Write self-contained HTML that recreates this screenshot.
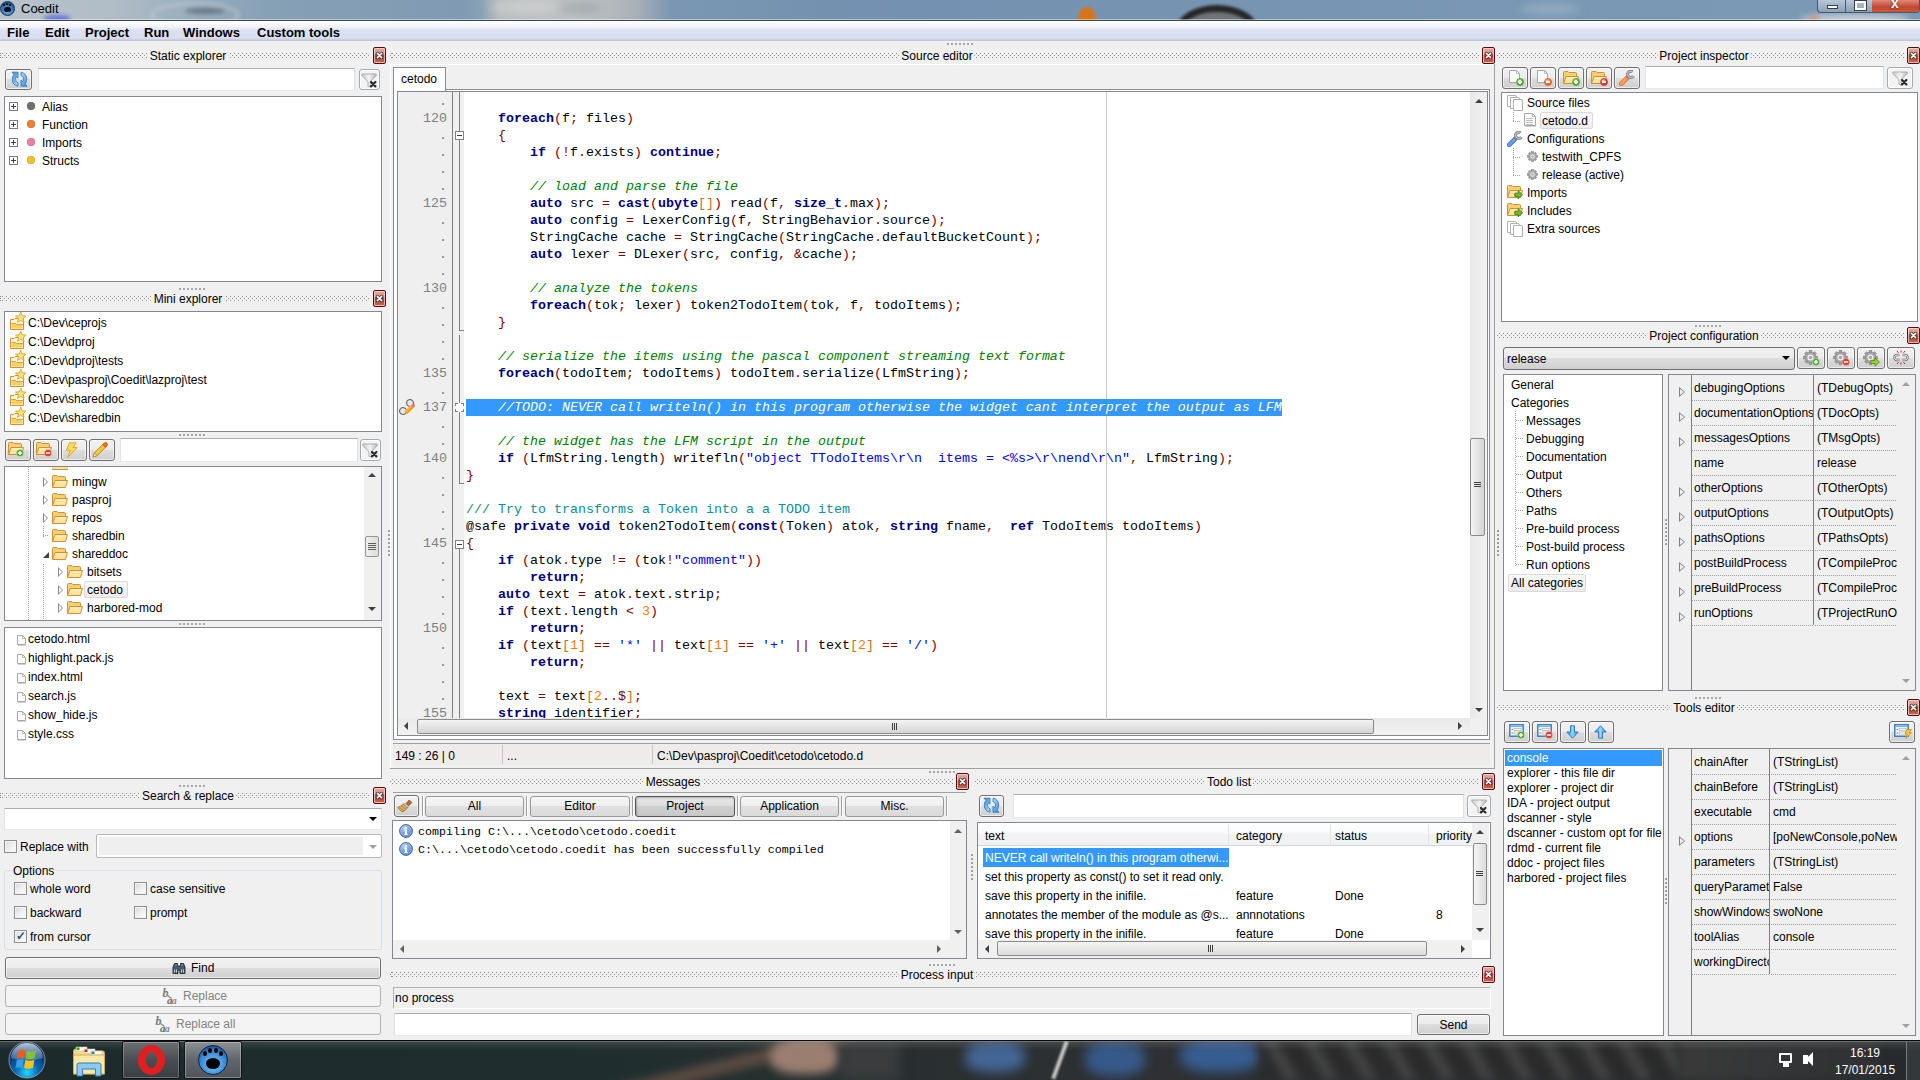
<!DOCTYPE html><html><head><meta charset="utf-8"><style>
*{box-sizing:border-box}
body{margin:0;width:1920px;height:1080px;overflow:hidden;background:#f0f0f0;font-family:"Liberation Sans",sans-serif;font-size:12px;color:#000;position:relative}
.a{position:absolute}
.t{position:absolute;white-space:nowrap;line-height:16px}
.box{position:absolute;background:#fff;border:1px solid #828790}
.dots{position:absolute;height:1px;background:repeating-linear-gradient(to right,#8c8c8c 0 1px,transparent 1px 4px)}
.cls{position:absolute;width:13px;height:17px;border:1px solid #4a1020;border-radius:2px;background:linear-gradient(#e8a898 0,#e09080 40%,#c84830 41%,#c04028 60%,#d06850 100%);box-shadow:inset 0 0 0 1px rgba(255,220,210,.7)}
.btn{position:absolute;border:1px solid #707070;border-radius:3px;background:linear-gradient(#f2f2f2 0,#ebebeb 50%,#dddddd 50%,#cfcfcf 100%);box-shadow:inset 0 0 0 1px rgba(255,255,255,.6)}
.edit{position:absolute;background:#fff;border:1px solid #abadb3;border-left-color:#e2e3ea;border-right-color:#dbdfe6;border-bottom-color:#e3e9ef}
.grip{position:absolute;height:2px;width:28px;background:repeating-linear-gradient(to right,#a8a8a8 0 2px,transparent 2px 4px)}
.mono{font-family:"Liberation Mono",monospace}
</style></head><body>
<div class="a" style="left:0;top:0;width:1920px;height:21px;overflow:hidden;background:linear-gradient(to right,#b9c3ca 0,#b0bcc6 6%,#98aebe 10%,#86a0b6 14%,#7f9ab2 24%,#86a0b4 25%,#b8bcbe 26%,#c0c2c2 30%,#aab2b8 33%,#7a96b2 35%,#7391b0 45%,#7694b2 60%,#7897b4 75%,#7b98b4 90%,#7c99b5 100%)">
<div class="a" style="left:150px;top:2px;width:90px;height:26px;border-radius:50%;border:3px solid rgba(210,215,220,.5);filter:blur(2px)"></div>
<div class="a" style="left:185px;top:8px;width:40px;height:6px;border-radius:50%;background:rgba(60,70,80,.5);filter:blur(2px)"></div>
<div class="a" style="left:44px;top:15px;width:26px;height:8px;border-radius:40%;background:#6a78d8;filter:blur(2px)"></div>
<div class="a" style="left:490px;top:0;width:70px;height:14px;border-radius:50%;background:rgba(220,220,220,.5);filter:blur(5px)"></div>
<div class="a" style="left:560px;top:2px;width:40px;height:12px;border-radius:50%;background:rgba(150,160,165,.6);filter:blur(4px)"></div>
<div class="a" style="left:1078px;top:7px;width:18px;height:24px;border-radius:50%;background:#d87418;filter:blur(1.5px)"></div>
<div class="a" style="left:1176px;top:5px;width:82px;height:50px;border-radius:50%;border:7px solid #262626;background:#707478;filter:blur(1.5px)"></div>
<div class="a" style="left:1520px;top:4px;width:60px;height:10px;border-radius:50%;background:rgba(180,195,210,.5);filter:blur(4px)"></div>
<div class="a" style="left:1800px;top:14px;width:110px;height:10px;border-radius:50%;background:rgba(230,230,235,.7);filter:blur(3px)"></div>
<div class="a" style="left:1808px;top:16px;width:12px;height:6px;border-radius:50%;background:rgba(230,130,90,.7);filter:blur(2px)"></div>
<div class="a" style="left:0;top:20px;width:1920px;height:1px;background:#3e4650"></div>
<div class="a" style="left:0;top:19px;width:1920px;height:1px;background:rgba(255,255,255,.45)"></div>
</div>
<div class="a" style="left:0;top:1px;width:15px;height:15px;border-radius:50%;background:radial-gradient(circle at 50% 70%,#5ab8f0 0,#2a6ab0 60%,#1a3050 100%);border:1px solid #20304a"></div>
<div class="a" style="left:4px;top:7px;width:7px;height:5px;border-radius:50%;background:#000"></div>
<div class="a" style="left:3px;top:4px;width:2px;height:2px;border-radius:50%;background:#000"></div>
<div class="a" style="left:6px;top:3px;width:2px;height:2px;border-radius:50%;background:#000"></div>
<div class="a" style="left:9px;top:4px;width:2px;height:2px;border-radius:50%;background:#000"></div>
<div class="t" style="left:21px;top:1px;font-size:13px;color:#000">Coedit</div>
<div class="a" style="left:1817px;top:0;width:103px;height:13px;border:1px solid #4a5866;border-top:none;border-radius:0 0 4px 4px;overflow:hidden;background:linear-gradient(#b8c8d8,#8aa0b8)">
<div class="a" style="left:27px;top:0;width:1px;height:12px;background:#4a5866"></div>
<div class="a" style="left:54px;top:0;width:48px;height:12px;background:linear-gradient(#e08878,#c04830 60%,#d05838)"></div>
<div class="a" style="left:9px;top:5px;width:11px;height:4px;background:#fff;border:1px solid #304050"></div>
<div class="a" style="left:37px;top:1px;width:11px;height:9px;border:2px solid #fff;box-shadow:0 0 0 1px #304050"></div>
<div class="a" style="left:53px;top:-5px;width:48px;height:14px;text-align:center;color:#fff;font-weight:bold;font-size:14px;text-shadow:0 0 2px #400">x</div>
</div>
<div class="a" style="left:0;top:21px;width:1920px;height:20px;background:linear-gradient(#ffffff 0,#f1f3fb 30%,#dde2f2 45%,#d9def0 85%,#c6cddf 95%,#b9c1d3 100%)"></div>
<div class="t" style="left:7px;top:25px;font-weight:bold;font-size:13px">File</div>
<div class="t" style="left:45px;top:25px;font-weight:bold;font-size:13px">Edit</div>
<div class="t" style="left:85px;top:25px;font-weight:bold;font-size:13px">Project</div>
<div class="t" style="left:144px;top:25px;font-weight:bold;font-size:13px">Run</div>
<div class="t" style="left:183px;top:25px;font-weight:bold;font-size:13px">Windows</div>
<div class="t" style="left:257px;top:25px;font-weight:bold;font-size:13px">Custom tools</div>
<div class="a" style="left:0;top:1040px;width:1920px;height:40px;overflow:hidden;background:linear-gradient(to right,#1c2a2b 0,#1f2d2e 30%,#25302f 40%,#2a2f30 50%,#2e3033 60%,#2c2e30 75%,#2a2c2e 90%,#262a2c 100%)">
<div class="a" style="left:600px;top:18px;width:260px;height:14px;background:#5a4a42;transform:rotate(-14deg);filter:blur(4px)"></div>
<div class="a" style="left:770px;top:0;width:70px;height:34px;border-radius:40%;background:#9a7e70;filter:blur(5px)"></div>
<div class="a" style="left:840px;top:0;width:60px;height:40px;background:#3a3c3e;filter:blur(6px)"></div>
<div class="a" style="left:965px;top:2px;width:60px;height:30px;border-radius:40%;background:#4a74b0;filter:blur(6px);opacity:.8"></div>
<div class="a" style="left:1058px;top:0;width:4px;height:40px;background:#c8c8c8;transform:rotate(20deg);filter:blur(1px)"></div>
<div class="a" style="left:1085px;top:2px;width:60px;height:34px;border-radius:40%;background:#3a64a0;filter:blur(6px);opacity:.8"></div>
<div class="a" style="left:1180px;top:0;width:80px;height:32px;border-radius:40%;background:#3a68a8;filter:blur(6px);opacity:.8"></div>
<div class="a" style="left:1260px;top:0;width:420px;height:40px;background:repeating-linear-gradient(60deg,#2a2a2a 0 22px,#4a4a4a 22px 34px);filter:blur(5px);opacity:.8"></div>
<div class="a" style="left:1680px;top:0;width:200px;height:40px;background:linear-gradient(to right,#3a3a3a,#2e3032);filter:blur(4px)"></div>
<div class="a" style="left:0;top:0;width:1920px;height:1px;background:#0a0a0a"></div>
<div class="a" style="left:0;top:1px;width:1920px;height:1px;background:rgba(255,255,255,.3)"></div>
<div class="a" style="left:0;top:2px;width:1920px;height:8px;background:linear-gradient(rgba(255,255,255,.12),rgba(255,255,255,0))"></div>
<div class="a" style="left:1906px;top:2px;width:14px;height:38px;background:rgba(60,66,70,.6);border-left:1px solid rgba(255,255,255,.35)"></div>
</div>
<svg class="a" style="left:8px;top:1041px" width="38" height="38" viewBox="0 0 38 38"><defs><radialGradient id="orb" cx="0.5" cy="0.85" r="0.7"><stop offset="0" stop-color="#20d8ff"/><stop offset=".45" stop-color="#0a68b8"/><stop offset="1" stop-color="#0a2a60"/></radialGradient>
<linearGradient id="orbt" x1="0" y1="0" x2="0" y2="1"><stop offset="0" stop-color="#c8d8e8" stop-opacity=".9"/><stop offset="1" stop-color="#6a90b8" stop-opacity=".5"/></linearGradient></defs>
<circle cx="19" cy="19" r="18" fill="url(#orb)" stroke="#a0a8b0" stroke-width="0.8"/>
<path d="M3 17 A16 15 0 0 1 35 17 Q19 22 3 17 Z" fill="url(#orbt)"/>
<path d="M10.5 10 Q13 8 17.5 9.5 L16 17.5 Q12 16 9 17.5 Z" fill="#f05a1a"/>
<path d="M19 10 Q23 11.5 28 9.5 L26.5 17.5 Q22 19 17.5 17.5 Z" fill="#8ac030"/>
<path d="M8.8 19 Q12 17.5 15.8 19 L14.5 27 Q11 25.5 7.5 27 Z" fill="#30a0e8"/>
<path d="M17.3 19 Q21.5 20.5 26.3 19 L25 27 Q20.5 28.5 16 27 Z" fill="#f8c020"/></svg>
<svg class="a" style="left:72px;top:1046px" width="34" height="31" viewBox="0 0 34 31"><path d="M1.5 5 Q1.5 3 3.5 3 H14 L15.5 5 H31 Q32.5 5 32.5 7 V28 H1.5 Z" fill="#f4dc90" stroke="#c8a850" stroke-width="0.9"/>
<rect x="4" y="1" width="11" height="4" fill="#fff" stroke="#d0c090" stroke-width="0.6"/><rect x="4.5" y="1.5" width="3" height="2.5" fill="#20b020"/>
<rect x="12" y="3" width="11" height="4" fill="#fff" stroke="#d0c090" stroke-width="0.6"/><rect x="12.5" y="3.5" width="3" height="2.5" fill="#d02020"/>
<rect x="19" y="5" width="11" height="4" fill="#fff" stroke="#d0c090" stroke-width="0.6"/><rect x="19.5" y="5.5" width="3" height="2.5" fill="#2080e0"/>
<path d="M1.5 9 H32.5 V28 H1.5 Z" fill="#fae8a8" stroke="#c8a850" stroke-width="0.9"/>
<path d="M5 30 V19 Q5 17 7 17 H27 Q29 17 29 19 V30 H23.5 V23 H10.5 V30 Z" fill="#8ccaf0" stroke="#2a80c0" stroke-width="1"/></svg>
<div class="a" style="left:122px;top:1041px;width:58px;height:38px;border:1px solid #101418;border-radius:2px;background:linear-gradient(#6a7074,#484e52 50%,#3a3e42);box-shadow:inset 0 0 0 1px rgba(255,255,255,.25)"></div>
<div class="a" style="left:138px;top:1045px;width:27px;height:30px;border-radius:50%;border:7px solid #e02020;border-left-width:8px;border-right-width:8px;background:transparent"></div>
<div class="a" style="left:184px;top:1041px;width:58px;height:38px;border:1px solid #101418;border-radius:2px;background:linear-gradient(#8a9094,#60666a 50%,#505458);box-shadow:inset 0 0 0 1px rgba(255,255,255,.3)"></div>
<div class="a" style="left:198px;top:1045px;width:30px;height:30px;border-radius:50%;background:radial-gradient(circle at 50% 65%,#80d0ff 0,#3080d0 60%,#102040 100%);border:1px solid #102040"></div>
<div class="a" style="left:206px;top:1058px;width:14px;height:11px;border-radius:50%;background:#000"></div>
<div class="a" style="left:203px;top:1051px;width:4px;height:5px;border-radius:50%;background:#000"></div>
<div class="a" style="left:208px;top:1048px;width:4px;height:5px;border-radius:50%;background:#000"></div>
<div class="a" style="left:214px;top:1048px;width:4px;height:5px;border-radius:50%;background:#000"></div>
<div class="a" style="left:219px;top:1051px;width:4px;height:5px;border-radius:50%;background:#000"></div>
<div class="a" style="left:1779px;top:1053px;width:13px;height:10px;border:2px solid #fff;border-radius:1px"></div>
<div class="a" style="left:1783px;top:1063px;width:6px;height:4px;background:#fff"></div>
<div class="a" style="left:1803px;top:1055px;width:5px;height:9px;background:#fff"></div>
<div class="a" style="left:1806px;top:1052px;width:0;height:0;border-right:7px solid #fff;border-top:7px solid transparent;border-bottom:7px solid transparent;"></div>
<div class="t" style="left:1850px;top:1045px;color:#fff;font-size:12px">16:19</div>
<div class="t" style="left:1835px;top:1062px;color:#fff;font-size:12px">17/01/2015</div>
<div class="dots" style="left:0px;top:53px;width:370px;background-position:2px 0"></div>
<div class="dots" style="left:0px;top:55px;width:370px;background-position:0px 0"></div>
<div class="dots" style="left:0px;top:57px;width:370px;background-position:2px 0"></div>
<div class="t" style="left:188px;top:47px;width:0;height:16px;line-height:18px"><span style="position:absolute;left:0;top:0;transform:translateX(-50%);background:#f0f0f0;padding:0 2px">Static explorer</span></div>
<div class="cls" style="left:373px;top:47px"><svg width="9" height="9" style="position:absolute;left:1px;top:3px"><path d="M2.4 2.4 L6.6 6.6 M6.6 2.4 L2.4 6.6" stroke="#2a3444" stroke-width="3.2" stroke-linecap="round"/><path d="M2.4 2.4 L6.6 6.6 M6.6 2.4 L2.4 6.6" stroke="#fff" stroke-width="1.6" stroke-linecap="round"/></svg></div>
<div class="btn" style="left:5px;top:69px;width:27px;height:21px"></div>
<svg class="a" style="left:11px;top:71px" width="17" height="16" viewBox="0 0 17 16"><defs><linearGradient id="gb" x1="0" y1="0" x2="0.6" y2="1"><stop offset="0" stop-color="#3a8ad0"/><stop offset="1" stop-color="#98d4ff"/></linearGradient></defs><path d="M1 1.2 H7 V7.2 L5.4 5.6 C4.8 6.5 4.6 7.3 4.6 8.3 C4.6 10 5.5 11.2 7 11.8 V15.2 C3.4 14.7 1.3 11.8 1.3 8.5 C1.3 6.6 1.9 4.9 3 3.2 Z" fill="url(#gb)" stroke="#2a70c0" stroke-width="0.8" stroke-linejoin="round"/><g transform="rotate(180 8.5 8.2)"><path d="M1 1.2 H7 V7.2 L5.4 5.6 C4.8 6.5 4.6 7.3 4.6 8.3 C4.6 10 5.5 11.2 7 11.8 V15.2 C3.4 14.7 1.3 11.8 1.3 8.5 C1.3 6.6 1.9 4.9 3 3.2 Z" fill="url(#gb)" stroke="#2a70c0" stroke-width="0.8" stroke-linejoin="round"/></g></svg>
<div class="edit" style="left:38px;top:68px;width:317px;height:23px;background:#fff"></div>
<div class="a" style="left:359px;top:69px;width:21px;height:21px;border:1px solid #a3abb0;border-radius:3px;background:#f3f3f3;box-shadow:inset 0 0 0 1px #fff"></div>
<svg class="a" style="left:361px;top:73px" width="16" height="15" viewBox="0 0 16 15"><defs><linearGradient id="gf" x1="0" y1="0" x2="1" y2="0"><stop offset="0" stop-color="#c8c8c8"/><stop offset=".5" stop-color="#f4f4f4"/><stop offset="1" stop-color="#b8b8b8"/></linearGradient></defs><path d="M0.8 1 H15.2 V2.6 L9.4 8.6 V13.6 H7 V8.6 L0.8 2.6 Z" fill="url(#gf)" stroke="#a8a8a8" stroke-width="0.9"/><path d="M10 9 L14.4 13.4 M14.4 9 L10 13.4" stroke="#2a2a2a" stroke-width="2.2" stroke-linecap="round"/></svg>
<div class="box" style="left:4px;top:96px;width:378px;height:186px;background:#fff;border-color:#828790;"></div>
<div class="a" style="left:9px;top:102px;width:9px;height:9px;border:1px solid #7a7a7a;background:#fff"></div>
<div class="a" style="left:11px;top:106px;width:5px;height:1px;background:#404040"></div>
<div class="a" style="left:13px;top:104px;width:1px;height:5px;background:#404040"></div>
<div class="a" style="left:27px;top:102px;width:8px;height:8px;border-radius:50%;background:#707070;box-shadow:inset 0 0 1px rgba(0,0,0,.5)"></div>
<div class="t" style="left:42px;top:99px;">Alias</div>
<div class="a" style="left:9px;top:120px;width:9px;height:9px;border:1px solid #7a7a7a;background:#fff"></div>
<div class="a" style="left:11px;top:124px;width:5px;height:1px;background:#404040"></div>
<div class="a" style="left:13px;top:122px;width:1px;height:5px;background:#404040"></div>
<div class="a" style="left:27px;top:120px;width:8px;height:8px;border-radius:50%;background:#f08030;box-shadow:inset 0 0 1px rgba(0,0,0,.5)"></div>
<div class="t" style="left:42px;top:117px;">Function</div>
<div class="a" style="left:9px;top:138px;width:9px;height:9px;border:1px solid #7a7a7a;background:#fff"></div>
<div class="a" style="left:11px;top:142px;width:5px;height:1px;background:#404040"></div>
<div class="a" style="left:13px;top:140px;width:1px;height:5px;background:#404040"></div>
<div class="a" style="left:27px;top:138px;width:8px;height:8px;border-radius:50%;background:#f080a0;box-shadow:inset 0 0 1px rgba(0,0,0,.5)"></div>
<div class="t" style="left:42px;top:135px;">Imports</div>
<div class="a" style="left:9px;top:156px;width:9px;height:9px;border:1px solid #7a7a7a;background:#fff"></div>
<div class="a" style="left:11px;top:160px;width:5px;height:1px;background:#404040"></div>
<div class="a" style="left:13px;top:158px;width:1px;height:5px;background:#404040"></div>
<div class="a" style="left:27px;top:156px;width:8px;height:8px;border-radius:50%;background:#f8c030;box-shadow:inset 0 0 1px rgba(0,0,0,.5)"></div>
<div class="t" style="left:42px;top:153px;">Structs</div>
<div class="grip" style="left:179px;top:288px"></div>
<div class="dots" style="left:0px;top:296px;width:370px;background-position:2px 0"></div>
<div class="dots" style="left:0px;top:298px;width:370px;background-position:0px 0"></div>
<div class="dots" style="left:0px;top:300px;width:370px;background-position:2px 0"></div>
<div class="t" style="left:188px;top:290px;width:0;height:16px;line-height:18px"><span style="position:absolute;left:0;top:0;transform:translateX(-50%);background:#f0f0f0;padding:0 2px">Mini explorer</span></div>
<div class="cls" style="left:373px;top:290px"><svg width="9" height="9" style="position:absolute;left:1px;top:3px"><path d="M2.4 2.4 L6.6 6.6 M6.6 2.4 L2.4 6.6" stroke="#2a3444" stroke-width="3.2" stroke-linecap="round"/><path d="M2.4 2.4 L6.6 6.6 M6.6 2.4 L2.4 6.6" stroke="#fff" stroke-width="1.6" stroke-linecap="round"/></svg></div>
<div class="box" style="left:4px;top:311px;width:378px;height:121px;background:#fff;border-color:#828790;"></div>
<svg class="a" style="left:10px;top:315px" width="15" height="17" viewBox="0 0 15 17"><path d="M0.5 4.5 H4 L5 3.5 H13.5 V14.5 H0.5 Z" fill="#fff6d8" stroke="#d89038"/><path d="M1.5 8 H5 L6 9 H12.5 V13.5 H1.5 Z" fill="#f6d060"/><path d="M1.5 8.5 H5.5 L6.5 9.5 H13" fill="none" stroke="#e0a040" stroke-width="1"/></svg><svg class="a" style="left:15px;top:312px" width="12" height="12" viewBox="0 0 12 12"><polygon points="5.80,0.20 7.21,3.86 11.13,4.07 8.08,6.54 9.09,10.33 5.80,8.20 2.51,10.33 3.52,6.54 0.47,4.07 4.39,3.86" fill="#f8e088" stroke="#d8a820" stroke-width="0.9" stroke-linejoin="round"/></svg>
<div class="t" style="left:28px;top:315px;">C:\Dev\ceprojs</div>
<svg class="a" style="left:10px;top:334px" width="15" height="17" viewBox="0 0 15 17"><path d="M0.5 4.5 H4 L5 3.5 H13.5 V14.5 H0.5 Z" fill="#fff6d8" stroke="#d89038"/><path d="M1.5 8 H5 L6 9 H12.5 V13.5 H1.5 Z" fill="#f6d060"/><path d="M1.5 8.5 H5.5 L6.5 9.5 H13" fill="none" stroke="#e0a040" stroke-width="1"/></svg><svg class="a" style="left:15px;top:331px" width="12" height="12" viewBox="0 0 12 12"><polygon points="5.80,0.20 7.21,3.86 11.13,4.07 8.08,6.54 9.09,10.33 5.80,8.20 2.51,10.33 3.52,6.54 0.47,4.07 4.39,3.86" fill="#f8e088" stroke="#d8a820" stroke-width="0.9" stroke-linejoin="round"/></svg>
<div class="t" style="left:28px;top:334px;">C:\Dev\dproj</div>
<svg class="a" style="left:10px;top:353px" width="15" height="17" viewBox="0 0 15 17"><path d="M0.5 4.5 H4 L5 3.5 H13.5 V14.5 H0.5 Z" fill="#fff6d8" stroke="#d89038"/><path d="M1.5 8 H5 L6 9 H12.5 V13.5 H1.5 Z" fill="#f6d060"/><path d="M1.5 8.5 H5.5 L6.5 9.5 H13" fill="none" stroke="#e0a040" stroke-width="1"/></svg><svg class="a" style="left:15px;top:350px" width="12" height="12" viewBox="0 0 12 12"><polygon points="5.80,0.20 7.21,3.86 11.13,4.07 8.08,6.54 9.09,10.33 5.80,8.20 2.51,10.33 3.52,6.54 0.47,4.07 4.39,3.86" fill="#f8e088" stroke="#d8a820" stroke-width="0.9" stroke-linejoin="round"/></svg>
<div class="t" style="left:28px;top:353px;">C:\Dev\dproj\tests</div>
<svg class="a" style="left:10px;top:372px" width="15" height="17" viewBox="0 0 15 17"><path d="M0.5 4.5 H4 L5 3.5 H13.5 V14.5 H0.5 Z" fill="#fff6d8" stroke="#d89038"/><path d="M1.5 8 H5 L6 9 H12.5 V13.5 H1.5 Z" fill="#f6d060"/><path d="M1.5 8.5 H5.5 L6.5 9.5 H13" fill="none" stroke="#e0a040" stroke-width="1"/></svg><svg class="a" style="left:15px;top:369px" width="12" height="12" viewBox="0 0 12 12"><polygon points="5.80,0.20 7.21,3.86 11.13,4.07 8.08,6.54 9.09,10.33 5.80,8.20 2.51,10.33 3.52,6.54 0.47,4.07 4.39,3.86" fill="#f8e088" stroke="#d8a820" stroke-width="0.9" stroke-linejoin="round"/></svg>
<div class="t" style="left:28px;top:372px;">C:\Dev\pasproj\Coedit\lazproj\test</div>
<svg class="a" style="left:10px;top:391px" width="15" height="17" viewBox="0 0 15 17"><path d="M0.5 4.5 H4 L5 3.5 H13.5 V14.5 H0.5 Z" fill="#fff6d8" stroke="#d89038"/><path d="M1.5 8 H5 L6 9 H12.5 V13.5 H1.5 Z" fill="#f6d060"/><path d="M1.5 8.5 H5.5 L6.5 9.5 H13" fill="none" stroke="#e0a040" stroke-width="1"/></svg><svg class="a" style="left:15px;top:388px" width="12" height="12" viewBox="0 0 12 12"><polygon points="5.80,0.20 7.21,3.86 11.13,4.07 8.08,6.54 9.09,10.33 5.80,8.20 2.51,10.33 3.52,6.54 0.47,4.07 4.39,3.86" fill="#f8e088" stroke="#d8a820" stroke-width="0.9" stroke-linejoin="round"/></svg>
<div class="t" style="left:28px;top:391px;">C:\Dev\shareddoc</div>
<svg class="a" style="left:10px;top:410px" width="15" height="17" viewBox="0 0 15 17"><path d="M0.5 4.5 H4 L5 3.5 H13.5 V14.5 H0.5 Z" fill="#fff6d8" stroke="#d89038"/><path d="M1.5 8 H5 L6 9 H12.5 V13.5 H1.5 Z" fill="#f6d060"/><path d="M1.5 8.5 H5.5 L6.5 9.5 H13" fill="none" stroke="#e0a040" stroke-width="1"/></svg><svg class="a" style="left:15px;top:407px" width="12" height="12" viewBox="0 0 12 12"><polygon points="5.80,0.20 7.21,3.86 11.13,4.07 8.08,6.54 9.09,10.33 5.80,8.20 2.51,10.33 3.52,6.54 0.47,4.07 4.39,3.86" fill="#f8e088" stroke="#d8a820" stroke-width="0.9" stroke-linejoin="round"/></svg>
<div class="t" style="left:28px;top:410px;">C:\Dev\sharedbin</div>
<div class="grip" style="left:179px;top:434px"></div>
<div class="btn" style="left:5px;top:439px;width:26px;height:22px"></div>
<div class="btn" style="left:33px;top:439px;width:26px;height:22px"></div>
<div class="btn" style="left:61px;top:439px;width:26px;height:22px"></div>
<div class="btn" style="left:89px;top:439px;width:26px;height:22px"></div>
<svg class="a" style="left:8px;top:442px" width="16" height="13" viewBox="0 0 16 13"><path d="M0.5 12.5 V1.5 Q0.5 0.5 1.5 0.5 H5 L6 1.5 H12.5 Q13.5 1.5 13.5 2.5 V5" fill="#f6d070" stroke="#d09038"/><path d="M0.5 12.5 L3 5.5 H15.5 L13.5 12.5 Z" fill="#fde49a" stroke="#d09038" stroke-linejoin="round"/><path d="M3.5 7 H14" stroke="#fff6d0" stroke-width="1"/></svg>
<svg class="a" style="left:15px;top:448px" width="10" height="10" viewBox="0 0 10 10"><circle cx="5" cy="5" r="3.6" fill="#48a828" stroke="#ffffff80" stroke-width="0.6"/><path d="M2.9 5 H7.1" stroke="#fff" stroke-width="1.5"/><path d="M5 2.9 V7.1" stroke="#fff" stroke-width="1.5"/></svg>
<svg class="a" style="left:36px;top:442px" width="16" height="13" viewBox="0 0 16 13"><path d="M0.5 12.5 V1.5 Q0.5 0.5 1.5 0.5 H5 L6 1.5 H12.5 Q13.5 1.5 13.5 2.5 V5" fill="#f6d070" stroke="#d09038"/><path d="M0.5 12.5 L3 5.5 H15.5 L13.5 12.5 Z" fill="#fde49a" stroke="#d09038" stroke-linejoin="round"/><path d="M3.5 7 H14" stroke="#fff6d0" stroke-width="1"/></svg>
<svg class="a" style="left:43px;top:448px" width="10" height="10" viewBox="0 0 10 10"><circle cx="5" cy="5" r="3.6" fill="#e03828" stroke="#ffffff80" stroke-width="0.6"/><path d="M2.9 5 H7.1" stroke="#fff" stroke-width="1.5"/></svg>
<svg class="a" style="left:65px;top:442px" width="14" height="16" viewBox="0 0 14 16"><path d="M4.5 0.8 H11.2 L8.2 5.6 H12.2 L2.8 15.2 L5.2 8.2 H1.4 Z" fill="#f8dc60" stroke="#e0a020" stroke-width="0.9" stroke-linejoin="round"/></svg>
<svg class="a" style="left:92px;top:442px" width="16" height="16" viewBox="0 0 16 16"><path d="M1.2 14.8 L2.4 10.8 L11.6 1.6 L14.4 4.4 L5.2 13.6 Z" fill="#f4c830" stroke="#c08020" stroke-width="0.9" stroke-linejoin="round"/><path d="M1.2 14.8 L2.4 10.8 L5.2 13.6 Z" fill="#f8e8d0" stroke="#c08020" stroke-width="0.8"/><path d="M10.6 2.6 L12.8 0.6 Q14 0 15 1 Q16 2 15.4 3.2 L13.4 5.4 Z" fill="#f07020" stroke="#d05010" stroke-width="0.6"/></svg>
<div class="edit" style="left:120px;top:438px;width:238px;height:24px;background:#fff"></div>
<div class="a" style="left:360px;top:439px;width:21px;height:22px;border:1px solid #a3abb0;border-radius:3px;background:#f3f3f3;box-shadow:inset 0 0 0 1px #fff"></div>
<svg class="a" style="left:362px;top:443px" width="16" height="15" viewBox="0 0 16 15"><defs><linearGradient id="gf" x1="0" y1="0" x2="1" y2="0"><stop offset="0" stop-color="#c8c8c8"/><stop offset=".5" stop-color="#f4f4f4"/><stop offset="1" stop-color="#b8b8b8"/></linearGradient></defs><path d="M0.8 1 H15.2 V2.6 L9.4 8.6 V13.6 H7 V8.6 L0.8 2.6 Z" fill="url(#gf)" stroke="#a8a8a8" stroke-width="0.9"/><path d="M10 9 L14.4 13.4 M14.4 9 L10 13.4" stroke="#2a2a2a" stroke-width="2.2" stroke-linecap="round"/></svg>
<div class="box" style="left:4px;top:466px;width:378px;height:155px;background:#fff;border-color:#828790;"></div>
<div class="a" style="left:364px;top:467px;width:17px;height:153px;background:#f0f0f0"></div>
<div class="a" style="left:368px;top:473px;width:0;height:0;border-left:4px solid transparent;border-right:4px solid transparent;border-bottom:4px solid #404040"></div>
<div class="a" style="left:368px;top:607px;width:0;height:0;border-left:4px solid transparent;border-right:4px solid transparent;border-top:4px solid #404040"></div>
<div class="a" style="left:365px;top:536px;width:14px;height:21px;border:1px solid #969696;border-radius:2px;background:linear-gradient(to right,#f0f0f0,#dcdcdc)"></div>
<div class="a" style="left:368px;top:543px;width:8px;height:7px;background:repeating-linear-gradient(#606060 0 1px,transparent 1px 2px)"></div>
<div class="a" style="left:28px;top:467px;width:1px;height:153px;background:repeating-linear-gradient(#a0a0a0 0 1px,transparent 1px 2px)"></div>
<div class="a" style="left:43px;top:526px;width:1px;height:12px;background:repeating-linear-gradient(#a0a0a0 0 1px,transparent 1px 2px)"></div>
<div class="a" style="left:43px;top:535px;width:6px;height:1px;background:repeating-linear-gradient(to right,#a0a0a0 0 1px,transparent 1px 2px)"></div>
<div class="a" style="left:43px;top:564px;width:1px;height:56px;background:repeating-linear-gradient(#a0a0a0 0 1px,transparent 1px 2px)"></div>
<div class="a" style="left:52px;top:467px;width:16px;height:3px;background:#fde49a;border-bottom:1px solid #d09038"></div>
<div class="a" style="left:43px;top:477px;width:0;height:0;border-top:5px solid transparent;border-bottom:5px solid transparent;border-left:5px solid #8a8a8a"></div>
<div class="a" style="left:44px;top:479px;width:0;height:0;border-top:3px solid transparent;border-bottom:3px solid transparent;border-left:3px solid #fff"></div>
<svg class="a" style="left:52px;top:475px" width="16" height="13" viewBox="0 0 16 13"><path d="M0.5 12.5 V1.5 Q0.5 0.5 1.5 0.5 H5 L6 1.5 H12.5 Q13.5 1.5 13.5 2.5 V5" fill="#f6d070" stroke="#d09038"/><path d="M0.5 12.5 L3 5.5 H15.5 L13.5 12.5 Z" fill="#fde49a" stroke="#d09038" stroke-linejoin="round"/><path d="M3.5 7 H14" stroke="#fff6d0" stroke-width="1"/></svg>
<div class="t" style="left:72px;top:474px;">mingw</div>
<div class="a" style="left:43px;top:495px;width:0;height:0;border-top:5px solid transparent;border-bottom:5px solid transparent;border-left:5px solid #8a8a8a"></div>
<div class="a" style="left:44px;top:497px;width:0;height:0;border-top:3px solid transparent;border-bottom:3px solid transparent;border-left:3px solid #fff"></div>
<svg class="a" style="left:52px;top:493px" width="16" height="13" viewBox="0 0 16 13"><path d="M0.5 12.5 V1.5 Q0.5 0.5 1.5 0.5 H5 L6 1.5 H12.5 Q13.5 1.5 13.5 2.5 V5" fill="#f6d070" stroke="#d09038"/><path d="M0.5 12.5 L3 5.5 H15.5 L13.5 12.5 Z" fill="#fde49a" stroke="#d09038" stroke-linejoin="round"/><path d="M3.5 7 H14" stroke="#fff6d0" stroke-width="1"/></svg>
<div class="t" style="left:72px;top:492px;">pasproj</div>
<div class="a" style="left:43px;top:513px;width:0;height:0;border-top:5px solid transparent;border-bottom:5px solid transparent;border-left:5px solid #8a8a8a"></div>
<div class="a" style="left:44px;top:515px;width:0;height:0;border-top:3px solid transparent;border-bottom:3px solid transparent;border-left:3px solid #fff"></div>
<svg class="a" style="left:52px;top:511px" width="16" height="13" viewBox="0 0 16 13"><path d="M0.5 12.5 V1.5 Q0.5 0.5 1.5 0.5 H5 L6 1.5 H12.5 Q13.5 1.5 13.5 2.5 V5" fill="#f6d070" stroke="#d09038"/><path d="M0.5 12.5 L3 5.5 H15.5 L13.5 12.5 Z" fill="#fde49a" stroke="#d09038" stroke-linejoin="round"/><path d="M3.5 7 H14" stroke="#fff6d0" stroke-width="1"/></svg>
<div class="t" style="left:72px;top:510px;">repos</div>
<svg class="a" style="left:52px;top:529px" width="16" height="13" viewBox="0 0 16 13"><path d="M0.5 12.5 V1.5 Q0.5 0.5 1.5 0.5 H5 L6 1.5 H12.5 Q13.5 1.5 13.5 2.5 V5" fill="#f6d070" stroke="#d09038"/><path d="M0.5 12.5 L3 5.5 H15.5 L13.5 12.5 Z" fill="#fde49a" stroke="#d09038" stroke-linejoin="round"/><path d="M3.5 7 H14" stroke="#fff6d0" stroke-width="1"/></svg>
<div class="t" style="left:72px;top:528px;">sharedbin</div>
<div class="a" style="left:43px;top:552px;width:0;height:0;border-left:6px solid transparent;border-bottom:6px solid #404040"></div>
<svg class="a" style="left:52px;top:547px" width="16" height="13" viewBox="0 0 16 13"><path d="M0.5 12.5 V1.5 Q0.5 0.5 1.5 0.5 H5 L6 1.5 H12.5 Q13.5 1.5 13.5 2.5 V5" fill="#f6d070" stroke="#d09038"/><path d="M0.5 12.5 L3 5.5 H15.5 L13.5 12.5 Z" fill="#fde49a" stroke="#d09038" stroke-linejoin="round"/><path d="M3.5 7 H14" stroke="#fff6d0" stroke-width="1"/></svg>
<div class="t" style="left:72px;top:546px;">shareddoc</div>
<div class="a" style="left:58px;top:567px;width:0;height:0;border-top:5px solid transparent;border-bottom:5px solid transparent;border-left:5px solid #8a8a8a"></div>
<div class="a" style="left:59px;top:569px;width:0;height:0;border-top:3px solid transparent;border-bottom:3px solid transparent;border-left:3px solid #fff"></div>
<svg class="a" style="left:67px;top:565px" width="16" height="13" viewBox="0 0 16 13"><path d="M0.5 12.5 V1.5 Q0.5 0.5 1.5 0.5 H5 L6 1.5 H12.5 Q13.5 1.5 13.5 2.5 V5" fill="#f6d070" stroke="#d09038"/><path d="M0.5 12.5 L3 5.5 H15.5 L13.5 12.5 Z" fill="#fde49a" stroke="#d09038" stroke-linejoin="round"/><path d="M3.5 7 H14" stroke="#fff6d0" stroke-width="1"/></svg>
<div class="t" style="left:87px;top:564px;">bitsets</div>
<div class="a" style="left:58px;top:585px;width:0;height:0;border-top:5px solid transparent;border-bottom:5px solid transparent;border-left:5px solid #8a8a8a"></div>
<div class="a" style="left:59px;top:587px;width:0;height:0;border-top:3px solid transparent;border-bottom:3px solid transparent;border-left:3px solid #fff"></div>
<svg class="a" style="left:67px;top:583px" width="16" height="13" viewBox="0 0 16 13"><path d="M0.5 12.5 V1.5 Q0.5 0.5 1.5 0.5 H5 L6 1.5 H12.5 Q13.5 1.5 13.5 2.5 V5" fill="#f6d070" stroke="#d09038"/><path d="M0.5 12.5 L3 5.5 H15.5 L13.5 12.5 Z" fill="#fde49a" stroke="#d09038" stroke-linejoin="round"/><path d="M3.5 7 H14" stroke="#fff6d0" stroke-width="1"/></svg>
<div class="a" style="left:84px;top:581px;width:44px;height:17px;border:1px solid #d9d9d9;border-radius:2px;background:linear-gradient(#fafafa,#ececec)"></div>
<div class="t" style="left:87px;top:582px;">cetodo</div>
<div class="a" style="left:58px;top:603px;width:0;height:0;border-top:5px solid transparent;border-bottom:5px solid transparent;border-left:5px solid #8a8a8a"></div>
<div class="a" style="left:59px;top:605px;width:0;height:0;border-top:3px solid transparent;border-bottom:3px solid transparent;border-left:3px solid #fff"></div>
<svg class="a" style="left:67px;top:601px" width="16" height="13" viewBox="0 0 16 13"><path d="M0.5 12.5 V1.5 Q0.5 0.5 1.5 0.5 H5 L6 1.5 H12.5 Q13.5 1.5 13.5 2.5 V5" fill="#f6d070" stroke="#d09038"/><path d="M0.5 12.5 L3 5.5 H15.5 L13.5 12.5 Z" fill="#fde49a" stroke="#d09038" stroke-linejoin="round"/><path d="M3.5 7 H14" stroke="#fff6d0" stroke-width="1"/></svg>
<div class="t" style="left:87px;top:600px;">harbored-mod</div>
<div class="grip" style="left:179px;top:623px"></div>
<div class="box" style="left:4px;top:627px;width:378px;height:152px;background:#fff;border-color:#828790;"></div>
<svg class="a" style="left:17px;top:635px" width="10" height="12" viewBox="0 0 10 12"><path d="M0.5 0.5 H5.5 L8.5 3.5 V9.5 H0.5 Z" fill="#fafafa" stroke="#a8a8a8"/><path d="M5.5 0.5 V3.5 H8.5" fill="none" stroke="#b8b8b8"/><path d="M1 10.5 H9" stroke="#d0d0d0"/></svg>
<div class="t" style="left:28px;top:631px;">cetodo.html</div>
<svg class="a" style="left:17px;top:654px" width="10" height="12" viewBox="0 0 10 12"><path d="M0.5 0.5 H5.5 L8.5 3.5 V9.5 H0.5 Z" fill="#fafafa" stroke="#a8a8a8"/><path d="M5.5 0.5 V3.5 H8.5" fill="none" stroke="#b8b8b8"/><path d="M1 10.5 H9" stroke="#d0d0d0"/></svg>
<div class="t" style="left:28px;top:650px;">highlight.pack.js</div>
<svg class="a" style="left:17px;top:673px" width="10" height="12" viewBox="0 0 10 12"><path d="M0.5 0.5 H5.5 L8.5 3.5 V9.5 H0.5 Z" fill="#fafafa" stroke="#a8a8a8"/><path d="M5.5 0.5 V3.5 H8.5" fill="none" stroke="#b8b8b8"/><path d="M1 10.5 H9" stroke="#d0d0d0"/></svg>
<div class="t" style="left:28px;top:669px;">index.html</div>
<svg class="a" style="left:17px;top:692px" width="10" height="12" viewBox="0 0 10 12"><path d="M0.5 0.5 H5.5 L8.5 3.5 V9.5 H0.5 Z" fill="#fafafa" stroke="#a8a8a8"/><path d="M5.5 0.5 V3.5 H8.5" fill="none" stroke="#b8b8b8"/><path d="M1 10.5 H9" stroke="#d0d0d0"/></svg>
<div class="t" style="left:28px;top:688px;">search.js</div>
<svg class="a" style="left:17px;top:711px" width="10" height="12" viewBox="0 0 10 12"><path d="M0.5 0.5 H5.5 L8.5 3.5 V9.5 H0.5 Z" fill="#fafafa" stroke="#a8a8a8"/><path d="M5.5 0.5 V3.5 H8.5" fill="none" stroke="#b8b8b8"/><path d="M1 10.5 H9" stroke="#d0d0d0"/></svg>
<div class="t" style="left:28px;top:707px;">show_hide.js</div>
<svg class="a" style="left:17px;top:730px" width="10" height="12" viewBox="0 0 10 12"><path d="M0.5 0.5 H5.5 L8.5 3.5 V9.5 H0.5 Z" fill="#fafafa" stroke="#a8a8a8"/><path d="M5.5 0.5 V3.5 H8.5" fill="none" stroke="#b8b8b8"/><path d="M1 10.5 H9" stroke="#d0d0d0"/></svg>
<div class="t" style="left:28px;top:726px;">style.css</div>
<div class="grip" style="left:179px;top:785px"></div>
<div class="dots" style="left:0px;top:793px;width:370px;background-position:2px 0"></div>
<div class="dots" style="left:0px;top:795px;width:370px;background-position:0px 0"></div>
<div class="dots" style="left:0px;top:797px;width:370px;background-position:2px 0"></div>
<div class="t" style="left:188px;top:787px;width:0;height:16px;line-height:18px"><span style="position:absolute;left:0;top:0;transform:translateX(-50%);background:#f0f0f0;padding:0 2px">Search &amp; replace</span></div>
<div class="cls" style="left:373px;top:787px"><svg width="9" height="9" style="position:absolute;left:1px;top:3px"><path d="M2.4 2.4 L6.6 6.6 M6.6 2.4 L2.4 6.6" stroke="#2a3444" stroke-width="3.2" stroke-linecap="round"/><path d="M2.4 2.4 L6.6 6.6 M6.6 2.4 L2.4 6.6" stroke="#fff" stroke-width="1.6" stroke-linecap="round"/></svg></div>
<div class="edit" style="left:4px;top:808px;width:378px;height:22px;background:#fff"></div>
<div class="a" style="left:369px;top:817px;width:0;height:0;border-left:4px solid transparent;border-right:4px solid transparent;border-top:4px solid #000"></div>
<div class="a" style="left:4px;top:840px;width:13px;height:13px;border:1px solid #8e8f8f;background:linear-gradient(135deg,#dcdcdc,#ffffff);box-shadow:inset 0 0 0 1px #f4f4f4"></div>
<div class="t" style="left:20px;top:839px;">Replace with</div>
<div class="a" style="left:96px;top:834px;width:286px;height:24px;border:1px solid #b8b8b8;border-radius:2px;background:#fff"></div>
<div class="a" style="left:99px;top:837px;width:264px;height:18px;background:#efefef"></div>
<div class="a" style="left:369px;top:845px;width:0;height:0;border-left:4px solid transparent;border-right:4px solid transparent;border-top:4px solid #a0a0a0"></div>
<div class="a" style="left:4px;top:870px;width:378px;height:80px;border:1px solid #d5dfe5;border-radius:3px"></div>
<div class="t" style="left:11px;top:863px;background:#f0f0f0;padding:0 2px">Options</div>
<div class="a" style="left:14px;top:882px;width:13px;height:13px;border:1px solid #8e8f8f;background:linear-gradient(135deg,#dcdcdc,#ffffff);box-shadow:inset 0 0 0 1px #f4f4f4"></div>
<div class="t" style="left:30px;top:881px;">whole word</div>
<div class="a" style="left:134px;top:882px;width:13px;height:13px;border:1px solid #8e8f8f;background:linear-gradient(135deg,#dcdcdc,#ffffff);box-shadow:inset 0 0 0 1px #f4f4f4"></div>
<div class="t" style="left:150px;top:881px;">case sensitive</div>
<div class="a" style="left:14px;top:906px;width:13px;height:13px;border:1px solid #8e8f8f;background:linear-gradient(135deg,#dcdcdc,#ffffff);box-shadow:inset 0 0 0 1px #f4f4f4"></div>
<div class="t" style="left:30px;top:905px;">backward</div>
<div class="a" style="left:134px;top:906px;width:13px;height:13px;border:1px solid #8e8f8f;background:linear-gradient(135deg,#dcdcdc,#ffffff);box-shadow:inset 0 0 0 1px #f4f4f4"></div>
<div class="t" style="left:150px;top:905px;">prompt</div>
<div class="a" style="left:14px;top:930px;width:13px;height:13px;border:1px solid #8e8f8f;background:linear-gradient(135deg,#dcdcdc,#ffffff);box-shadow:inset 0 0 0 1px #f4f4f4"></div><div class="a" style="left:16px;top:930px;font-size:12px;line-height:12px;color:#2a4a90;font-weight:bold">&#x2713;</div>
<div class="t" style="left:30px;top:929px;">from cursor</div>
<div class="a" style="left:5px;top:957px;width:376px;height:22px;border:1px solid #707070;border-radius:3px;background:linear-gradient(#f2f2f2 0,#ebebeb 50%,#dddddd 50%,#cfcfcf 100%);box-shadow:inset 0 0 0 1px rgba(255,255,255,.6)"></div>
<svg class="a" style="left:172px;top:962px" width="14" height="12" viewBox="0 0 14 12"><path d="M1 5 L2.5 1.5 H5.5 V4 H8.5 V1.5 H11.5 L13 5 V11.5 H8 V8 H6 V11.5 H1 Z" fill="#4a5a6e" stroke="#202830" stroke-width="0.9" stroke-linejoin="round"/><path d="M2.5 7.5 V10.5 M4.5 7.5 V10.5 M9.5 7.5 V10.5 M11.5 7.5 V10.5" stroke="#c8d4e0" stroke-width="1"/><path d="M3 3 H5 M9 3 H11" stroke="#8aa0b8" stroke-width="1"/></svg>
<div class="t" style="left:191px;top:960px;color:#000">Find</div>
<div class="a" style="left:5px;top:985px;width:376px;height:22px;border:1px solid #adb2b5;border-radius:3px;background:#f4f4f4"></div>
<svg class="a" style="left:162px;top:988px" width="16" height="17" viewBox="0 0 16 17"><text x="0.5" y="9" font-family="Liberation Serif" font-style="italic" font-weight="bold" font-size="12" fill="#7a7a7a">b</text><path d="M5.5 7.5 L9.5 10.5" stroke="#8a8a8a" stroke-width="1.4"/><text x="5" y="16" font-family="Liberation Serif" font-style="italic" font-weight="bold" font-size="11" fill="#6a6a6a">a</text><text x="9.8" y="16" font-family="Liberation Serif" font-style="italic" font-weight="bold" font-size="10" fill="#8a8a8a">a</text></svg>
<div class="t" style="left:183px;top:988px;color:#838383">Replace</div>
<div class="a" style="left:5px;top:1013px;width:376px;height:22px;border:1px solid #adb2b5;border-radius:3px;background:#f4f4f4"></div>
<svg class="a" style="left:155px;top:1016px" width="16" height="17" viewBox="0 0 16 17"><text x="0.5" y="9" font-family="Liberation Serif" font-style="italic" font-weight="bold" font-size="12" fill="#7a7a7a">b</text><path d="M5.5 7.5 L9.5 10.5" stroke="#8a8a8a" stroke-width="1.4"/><text x="5" y="16" font-family="Liberation Serif" font-style="italic" font-weight="bold" font-size="11" fill="#6a6a6a">a</text><text x="9.8" y="16" font-family="Liberation Serif" font-style="italic" font-weight="bold" font-size="10" fill="#8a8a8a">a</text></svg>
<div class="t" style="left:176px;top:1016px;color:#838383">Replace all</div>
<div class="grip" style="left:947px;top:43px"></div>
<div class="dots" style="left:390px;top:53px;width:1089px;background-position:2px 0"></div>
<div class="dots" style="left:390px;top:55px;width:1089px;background-position:0px 0"></div>
<div class="dots" style="left:390px;top:57px;width:1089px;background-position:2px 0"></div>
<div class="t" style="left:937px;top:47px;width:0;height:16px;line-height:18px"><span style="position:absolute;left:0;top:0;transform:translateX(-50%);background:#f0f0f0;padding:0 2px">Source editor</span></div>
<div class="cls" style="left:1482px;top:47px"><svg width="9" height="9" style="position:absolute;left:1px;top:3px"><path d="M2.4 2.4 L6.6 6.6 M6.6 2.4 L2.4 6.6" stroke="#2a3444" stroke-width="3.2" stroke-linecap="round"/><path d="M2.4 2.4 L6.6 6.6 M6.6 2.4 L2.4 6.6" stroke="#fff" stroke-width="1.6" stroke-linecap="round"/></svg></div>
<div class="a" style="left:390px;top:64px;width:1104px;height:1px;background:#fff"></div>
<div class="a" style="left:390px;top:64px;width:1px;height:705px;background:#fff"></div>
<div class="a" style="left:1494px;top:64px;width:1px;height:705px;background:#a0a0a0"></div>
<div class="a" style="left:390px;top:768px;width:1105px;height:1px;background:#a0a0a0"></div>
<div class="a" style="left:393px;top:89px;width:1097px;height:651px;border:1px solid #898c95;background:#fff"></div>
<div class="a" style="left:393px;top:67px;width:53px;height:24px;border:1px solid #898c95;border-bottom:none;background:#fff"></div>
<div class="t" style="left:401px;top:71px;">cetodo</div>
<div class="a" style="left:397px;top:91px;width:1091px;height:645px;border:1px solid #828790;background:#fff;overflow:hidden">
<div class="a" style="left:0;top:0;width:54px;height:626px;background:#efefef"></div>
<div class="a" style="left:54px;top:0;width:1px;height:626px;background:#808080"></div>
<div class="a" style="left:55px;top:0;width:11px;height:626px;background:#f0f0f0"></div>
<div class="a" style="left:708px;top:0;width:1px;height:626px;background:#c8c8c8"></div>
</div>
<div class="a" style="left:459px;top:92px;width:1px;height:238px;background:#808080"></div>
<div class="a" style="left:459px;top:330px;width:5px;height:1px;background:#808080"></div>
<div class="a" style="left:459px;top:335px;width:1px;height:148px;background:#808080"></div>
<div class="a" style="left:459px;top:483px;width:5px;height:1px;background:#808080"></div>
<div class="a" style="left:459px;top:549px;width:1px;height:169px;background:#808080"></div>
<div class="a" style="left:455px;top:131px;width:9px;height:9px;border:1px solid #808080;background:#fff"></div>
<div class="a" style="left:457px;top:135px;width:5px;height:1px;background:#404040"></div>
<div class="a" style="left:455px;top:403px;width:9px;height:9px;border:1px dashed #808080;background:#fff"></div>
<div class="a" style="left:455px;top:540px;width:9px;height:9px;border:1px solid #808080;background:#fff"></div>
<div class="a" style="left:457px;top:544px;width:5px;height:1px;background:#404040"></div>
<div class="a mono" style="left:398px;top:93px;width:1072px;height:625px;overflow:hidden;font-size:13.333px;line-height:17px">
<div class="a" style="left:0;top:0px;width:49px;text-align:right;color:#808080;white-space:pre">.</div>
<div class="a" style="left:0;top:17px;width:49px;text-align:right;color:#808080;white-space:pre">120</div>
<div class="a" style="left:68px;top:17px;white-space:pre">    <b style="color:#000080">foreach</b><span style="color:#800000">(</span>f<span style="color:#800000">;</span> files<span style="color:#800000">)</span></div>
<div class="a" style="left:0;top:34px;width:49px;text-align:right;color:#808080;white-space:pre">.</div>
<div class="a" style="left:68px;top:34px;white-space:pre">    <span style="color:#800000">{</span></div>
<div class="a" style="left:0;top:51px;width:49px;text-align:right;color:#808080;white-space:pre">.</div>
<div class="a" style="left:68px;top:51px;white-space:pre">        <b style="color:#000080">if</b> <span style="color:#800000">(</span><span style="color:#800000">!</span>f<span style="color:#800000">.</span>exists<span style="color:#800000">)</span> <b style="color:#000080">continue</b><span style="color:#800000">;</span></div>
<div class="a" style="left:0;top:68px;width:49px;text-align:right;color:#808080;white-space:pre">.</div>
<div class="a" style="left:0;top:85px;width:49px;text-align:right;color:#808080;white-space:pre">.</div>
<div class="a" style="left:68px;top:85px;white-space:pre">        <i style="color:#008000">// load and parse the file</i></div>
<div class="a" style="left:0;top:102px;width:49px;text-align:right;color:#808080;white-space:pre">125</div>
<div class="a" style="left:68px;top:102px;white-space:pre">        <b style="color:#000080">auto</b> src <span style="color:#800000">=</span> <b style="color:#000080">cast</b><span style="color:#800000">(</span><b style="color:#000080">ubyte</b><span style="color:#c87020">[</span><span style="color:#c87020">]</span><span style="color:#800000">)</span> read<span style="color:#800000">(</span>f<span style="color:#800000">,</span> <b style="color:#000080">size_t</b><span style="color:#800000">.</span>max<span style="color:#800000">)</span><span style="color:#800000">;</span></div>
<div class="a" style="left:0;top:119px;width:49px;text-align:right;color:#808080;white-space:pre">.</div>
<div class="a" style="left:68px;top:119px;white-space:pre">        <b style="color:#000080">auto</b> config <span style="color:#800000">=</span> LexerConfig<span style="color:#800000">(</span>f<span style="color:#800000">,</span> StringBehavior<span style="color:#800000">.</span>source<span style="color:#800000">)</span><span style="color:#800000">;</span></div>
<div class="a" style="left:0;top:136px;width:49px;text-align:right;color:#808080;white-space:pre">.</div>
<div class="a" style="left:68px;top:136px;white-space:pre">        StringCache cache <span style="color:#800000">=</span> StringCache<span style="color:#800000">(</span>StringCache<span style="color:#800000">.</span>defaultBucketCount<span style="color:#800000">)</span><span style="color:#800000">;</span></div>
<div class="a" style="left:0;top:153px;width:49px;text-align:right;color:#808080;white-space:pre">.</div>
<div class="a" style="left:68px;top:153px;white-space:pre">        <b style="color:#000080">auto</b> lexer <span style="color:#800000">=</span> DLexer<span style="color:#800000">(</span>src<span style="color:#800000">,</span> config<span style="color:#800000">,</span> <span style="color:#800000">&amp;</span>cache<span style="color:#800000">)</span><span style="color:#800000">;</span></div>
<div class="a" style="left:0;top:170px;width:49px;text-align:right;color:#808080;white-space:pre">.</div>
<div class="a" style="left:0;top:187px;width:49px;text-align:right;color:#808080;white-space:pre">130</div>
<div class="a" style="left:68px;top:187px;white-space:pre">        <i style="color:#008000">// analyze the tokens</i></div>
<div class="a" style="left:0;top:204px;width:49px;text-align:right;color:#808080;white-space:pre">.</div>
<div class="a" style="left:68px;top:204px;white-space:pre">        <b style="color:#000080">foreach</b><span style="color:#800000">(</span>tok<span style="color:#800000">;</span> lexer<span style="color:#800000">)</span> token2TodoItem<span style="color:#800000">(</span>tok<span style="color:#800000">,</span> f<span style="color:#800000">,</span> todoItems<span style="color:#800000">)</span><span style="color:#800000">;</span></div>
<div class="a" style="left:0;top:221px;width:49px;text-align:right;color:#808080;white-space:pre">.</div>
<div class="a" style="left:68px;top:221px;white-space:pre">    <span style="color:#800000">}</span></div>
<div class="a" style="left:0;top:238px;width:49px;text-align:right;color:#808080;white-space:pre">.</div>
<div class="a" style="left:0;top:255px;width:49px;text-align:right;color:#808080;white-space:pre">.</div>
<div class="a" style="left:68px;top:255px;white-space:pre">    <i style="color:#008000">// serialize the items using the pascal component streaming text format</i></div>
<div class="a" style="left:0;top:272px;width:49px;text-align:right;color:#808080;white-space:pre">135</div>
<div class="a" style="left:68px;top:272px;white-space:pre">    <b style="color:#000080">foreach</b><span style="color:#800000">(</span>todoItem<span style="color:#800000">;</span> todoItems<span style="color:#800000">)</span> todoItem<span style="color:#800000">.</span>serialize<span style="color:#800000">(</span>LfmString<span style="color:#800000">)</span><span style="color:#800000">;</span></div>
<div class="a" style="left:0;top:289px;width:49px;text-align:right;color:#808080;white-space:pre">.</div>
<div class="a" style="left:0;top:306px;width:49px;text-align:right;color:#808080;white-space:pre">137</div>
<div class="a" style="left:68px;top:306px;height:17px;white-space:pre;background:#3399ff;color:#fff;font-style:italic">    //TODO: NEVER call writeln() in this program otherwise the widget cant interpret the output as LFM</div>
<div class="a" style="left:0;top:323px;width:49px;text-align:right;color:#808080;white-space:pre">.</div>
<div class="a" style="left:0;top:340px;width:49px;text-align:right;color:#808080;white-space:pre">.</div>
<div class="a" style="left:68px;top:340px;white-space:pre">    <i style="color:#008000">// the widget has the LFM script in the output</i></div>
<div class="a" style="left:0;top:357px;width:49px;text-align:right;color:#808080;white-space:pre">140</div>
<div class="a" style="left:68px;top:357px;white-space:pre">    <b style="color:#000080">if</b> <span style="color:#800000">(</span>LfmString<span style="color:#800000">.</span>length<span style="color:#800000">)</span> writefln<span style="color:#800000">(</span><span style="color:#0000ff">"object TTodoItems\r\n  items = &lt;%s&gt;\r\nend\r\n"</span><span style="color:#800000">,</span> LfmString<span style="color:#800000">)</span><span style="color:#800000">;</span></div>
<div class="a" style="left:0;top:374px;width:49px;text-align:right;color:#808080;white-space:pre">.</div>
<div class="a" style="left:68px;top:374px;white-space:pre"><span style="color:#800000">}</span></div>
<div class="a" style="left:0;top:391px;width:49px;text-align:right;color:#808080;white-space:pre">.</div>
<div class="a" style="left:0;top:408px;width:49px;text-align:right;color:#808080;white-space:pre">.</div>
<div class="a" style="left:68px;top:408px;white-space:pre"><i style="color:#0a9090;font-style:normal">/// Try to transforms a Token into a a TODO item</i></div>
<div class="a" style="left:0;top:425px;width:49px;text-align:right;color:#808080;white-space:pre">.</div>
<div class="a" style="left:68px;top:425px;white-space:pre">@safe <b style="color:#000080">private</b> <b style="color:#000080">void</b> token2TodoItem<span style="color:#800000">(</span><b style="color:#000080">const</b><span style="color:#800000">(</span>Token<span style="color:#800000">)</span> atok<span style="color:#800000">,</span> <b style="color:#000080">string</b> fname<span style="color:#800000">,</span>  <b style="color:#000080">ref</b> TodoItems todoItems<span style="color:#800000">)</span></div>
<div class="a" style="left:0;top:442px;width:49px;text-align:right;color:#808080;white-space:pre">145</div>
<div class="a" style="left:68px;top:442px;white-space:pre"><span style="color:#800000">{</span></div>
<div class="a" style="left:0;top:459px;width:49px;text-align:right;color:#808080;white-space:pre">.</div>
<div class="a" style="left:68px;top:459px;white-space:pre">    <b style="color:#000080">if</b> <span style="color:#800000">(</span>atok<span style="color:#800000">.</span>type <span style="color:#800000">!</span><span style="color:#800000">=</span> <span style="color:#800000">(</span>tok<span style="color:#800000">!</span><span style="color:#0000ff">"comment"</span><span style="color:#800000">)</span><span style="color:#800000">)</span></div>
<div class="a" style="left:0;top:476px;width:49px;text-align:right;color:#808080;white-space:pre">.</div>
<div class="a" style="left:68px;top:476px;white-space:pre">        <b style="color:#000080">return</b><span style="color:#800000">;</span></div>
<div class="a" style="left:0;top:493px;width:49px;text-align:right;color:#808080;white-space:pre">.</div>
<div class="a" style="left:68px;top:493px;white-space:pre">    <b style="color:#000080">auto</b> text <span style="color:#800000">=</span> atok<span style="color:#800000">.</span>text<span style="color:#800000">.</span>strip<span style="color:#800000">;</span></div>
<div class="a" style="left:0;top:510px;width:49px;text-align:right;color:#808080;white-space:pre">.</div>
<div class="a" style="left:68px;top:510px;white-space:pre">    <b style="color:#000080">if</b> <span style="color:#800000">(</span>text<span style="color:#800000">.</span>length <span style="color:#800000">&lt;</span> <span style="color:#ff8000">3</span><span style="color:#800000">)</span></div>
<div class="a" style="left:0;top:527px;width:49px;text-align:right;color:#808080;white-space:pre">150</div>
<div class="a" style="left:68px;top:527px;white-space:pre">        <b style="color:#000080">return</b><span style="color:#800000">;</span></div>
<div class="a" style="left:0;top:544px;width:49px;text-align:right;color:#808080;white-space:pre">.</div>
<div class="a" style="left:68px;top:544px;white-space:pre">    <b style="color:#000080">if</b> <span style="color:#800000">(</span>text<span style="color:#c87020">[</span><span style="color:#ff8000">1</span><span style="color:#c87020">]</span> <span style="color:#800000">=</span><span style="color:#800000">=</span> <span style="color:#0000ff">'*'</span> <span style="color:#800000">|</span><span style="color:#800000">|</span> text<span style="color:#c87020">[</span><span style="color:#ff8000">1</span><span style="color:#c87020">]</span> <span style="color:#800000">=</span><span style="color:#800000">=</span> <span style="color:#0000ff">'+'</span> <span style="color:#800000">|</span><span style="color:#800000">|</span> text<span style="color:#c87020">[</span><span style="color:#ff8000">2</span><span style="color:#c87020">]</span> <span style="color:#800000">=</span><span style="color:#800000">=</span> <span style="color:#0000ff">'/'</span><span style="color:#800000">)</span></div>
<div class="a" style="left:0;top:561px;width:49px;text-align:right;color:#808080;white-space:pre">.</div>
<div class="a" style="left:68px;top:561px;white-space:pre">        <b style="color:#000080">return</b><span style="color:#800000">;</span></div>
<div class="a" style="left:0;top:578px;width:49px;text-align:right;color:#808080;white-space:pre">.</div>
<div class="a" style="left:0;top:595px;width:49px;text-align:right;color:#808080;white-space:pre">.</div>
<div class="a" style="left:68px;top:595px;white-space:pre">    text <span style="color:#800000">=</span> text<span style="color:#c87020">[</span><span style="color:#ff8000">2</span><span style="color:#800000">.</span><span style="color:#800000">.</span><span style="color:#800000">$</span><span style="color:#c87020">]</span><span style="color:#800000">;</span></div>
<div class="a" style="left:0;top:612px;width:49px;text-align:right;color:#808080;white-space:pre">155</div>
<div class="a" style="left:68px;top:612px;white-space:pre">    <b style="color:#000080">string</b> identifier<span style="color:#800000">;</span></div>
</div>
<div class="a" style="left:399px;top:407px;width:8px;height:8px;border-radius:50%;border:1px solid #505050;background:#e8e8e8"></div>
<div class="a" style="left:406px;top:399px;width:8px;height:8px;border-radius:50%;border:1px solid #505050;background:#e8e8e8"></div>
<div class="a" style="left:404px;top:407px;width:11px;height:4px;background:linear-gradient(#ffc040,#f09010);transform:rotate(-45deg)"></div>
<div class="a" style="left:412px;top:404px;width:3px;height:3px;background:#f060c0;border-radius:50%"></div>
<div class="a" style="left:1470px;top:92px;width:17px;height:626px;background:linear-gradient(to right,#e8e8e8,#f2f2f2)"></div>
<div class="a" style="left:1475px;top:99px;width:0;height:0;border-left:4px solid transparent;border-right:4px solid transparent;border-bottom:4px solid #404040"></div>
<div class="a" style="left:1475px;top:708px;width:0;height:0;border-left:4px solid transparent;border-right:4px solid transparent;border-top:4px solid #404040"></div>
<div class="a" style="left:1470px;top:438px;width:15px;height:98px;border:1px solid #8b8b8b;border-radius:2px;background:linear-gradient(to right,#f4f4f4,#e4e4e4 50%,#d4d4d4)"></div>
<div class="a" style="left:1474px;top:482px;width:7px;height:6px;background:repeating-linear-gradient(#404040 0 1px,transparent 1px 2px)"></div>
<div class="a" style="left:398px;top:718px;width:1089px;height:17px;background:linear-gradient(#e8e8e8,#f2f2f2)"></div>
<div class="a" style="left:404px;top:722px;width:0;height:0;border-top:4px solid transparent;border-bottom:4px solid transparent;border-right:4px solid #404040"></div>
<div class="a" style="left:1458px;top:722px;width:0;height:0;border-top:4px solid transparent;border-bottom:4px solid transparent;border-left:4px solid #404040"></div>
<div class="a" style="left:417px;top:719px;width:957px;height:15px;border:1px solid #8b8b8b;border-radius:2px;background:linear-gradient(#f4f4f4,#e4e4e4 50%,#d4d4d4)"></div>
<div class="a" style="left:892px;top:723px;width:6px;height:7px;background:repeating-linear-gradient(to right,#404040 0 1px,transparent 1px 2px)"></div>
<div class="a" style="left:1470px;top:718px;width:17px;height:17px;background:#f0f0f0"></div>
<div class="a" style="left:393px;top:743px;width:1097px;height:1px;background:#a0a0a0"></div>
<div class="a" style="left:393px;top:744px;width:1097px;height:21px;background:#efebea"></div>
<div class="a" style="left:502px;top:745px;width:1px;height:19px;background:#c8c4c0"></div>
<div class="a" style="left:652px;top:745px;width:1px;height:19px;background:#c8c4c0"></div>
<div class="t" style="left:395px;top:748px;">149 : 26 | 0</div>
<div class="t" style="left:507px;top:748px;">...</div>
<div class="t" style="left:657px;top:748px;">C:\Dev\pasproj\Coedit\cetodo\cetodo.d</div>
<div class="grip" style="left:929px;top:771px"></div>
<div class="dots" style="left:390px;top:779px;width:563px;background-position:2px 0"></div>
<div class="dots" style="left:390px;top:781px;width:563px;background-position:0px 0"></div>
<div class="dots" style="left:390px;top:783px;width:563px;background-position:2px 0"></div>
<div class="t" style="left:673px;top:773px;width:0;height:16px;line-height:18px"><span style="position:absolute;left:0;top:0;transform:translateX(-50%);background:#f0f0f0;padding:0 2px">Messages</span></div>
<div class="cls" style="left:956px;top:773px"><svg width="9" height="9" style="position:absolute;left:1px;top:3px"><path d="M2.4 2.4 L6.6 6.6 M6.6 2.4 L2.4 6.6" stroke="#2a3444" stroke-width="3.2" stroke-linecap="round"/><path d="M2.4 2.4 L6.6 6.6 M6.6 2.4 L2.4 6.6" stroke="#fff" stroke-width="1.6" stroke-linecap="round"/></svg></div>
<div class="a" style="left:393px;top:792px;width:573px;height:1px;background:#a0a0a0"></div>
<div class="btn" style="left:394px;top:795px;width:25px;height:22px"></div>
<svg class="a" style="left:397px;top:799px" width="16" height="14" viewBox="0 0 16 14"><path d="M12 1 L15 3.5 L11.5 7 L9 4.5 Z" fill="#b86a30" stroke="#804010" stroke-width="0.6"/><path d="M7.5 4 L11.5 8 L10.5 9 L6.5 5 Z" fill="#e8e8f0" stroke="#7080a0" stroke-width="0.6"/><path d="M6.5 5 L10.5 9 L6 13 Q3 12 0.8 8.5 Q3.5 7.5 6.5 5 Z" fill="#d8b060" stroke="#906020" stroke-width="0.7"/><path d="M3 9 L7 11.5 M4.5 7.5 L8.5 10" stroke="#a07830" stroke-width="0.6"/></svg>
<div class="a" style="left:422px;top:796px;width:2px;height:20px;border-left:1px solid #a0a0a0;border-right:1px solid #fff"></div>
<div class="a" style="left:425px;top:796px;width:99px;height:21px;border:1px solid #9a9a9a;border-radius:3px;background:linear-gradient(#f6f6f6,#eeeeee 50%,#e0e0e0 50%,#dadada)"></div>
<div class="t" style="left:425px;top:798px;width:99px;text-align:center">All</div>
<div class="a" style="left:526px;top:796px;width:2px;height:20px;border-left:1px solid #a0a0a0;border-right:1px solid #fff"></div>
<div class="a" style="left:530px;top:796px;width:100px;height:21px;border:1px solid #9a9a9a;border-radius:3px;background:linear-gradient(#f6f6f6,#eeeeee 50%,#e0e0e0 50%,#dadada)"></div>
<div class="t" style="left:530px;top:798px;width:100px;text-align:center">Editor</div>
<div class="a" style="left:632px;top:796px;width:2px;height:20px;border-left:1px solid #a0a0a0;border-right:1px solid #fff"></div>
<div class="a" style="left:635px;top:796px;width:100px;height:21px;border:1px solid #555;border-radius:3px;background:linear-gradient(#e8e8e8,#dcdcdc 50%,#cfcfcf 50%,#c8c8c8);box-shadow:inset 1px 1px 2px rgba(0,0,0,.25)"></div>
<div class="t" style="left:635px;top:798px;width:100px;text-align:center">Project</div>
<div class="a" style="left:737px;top:796px;width:2px;height:20px;border-left:1px solid #a0a0a0;border-right:1px solid #fff"></div>
<div class="a" style="left:740px;top:796px;width:99px;height:21px;border:1px solid #9a9a9a;border-radius:3px;background:linear-gradient(#f6f6f6,#eeeeee 50%,#e0e0e0 50%,#dadada)"></div>
<div class="t" style="left:740px;top:798px;width:99px;text-align:center">Application</div>
<div class="a" style="left:841px;top:796px;width:2px;height:20px;border-left:1px solid #a0a0a0;border-right:1px solid #fff"></div>
<div class="a" style="left:845px;top:796px;width:99px;height:21px;border:1px solid #9a9a9a;border-radius:3px;background:linear-gradient(#f6f6f6,#eeeeee 50%,#e0e0e0 50%,#dadada)"></div>
<div class="t" style="left:845px;top:798px;width:99px;text-align:center">Misc.</div>
<div class="a" style="left:946px;top:796px;width:2px;height:20px;border-left:1px solid #a0a0a0;border-right:1px solid #fff"></div>
<div class="box" style="left:392px;top:820px;width:575px;height:139px;background:#fff;border-color:#828790;"></div>
<div class="a" style="left:950px;top:821px;width:16px;height:119px;background:#f0f0f0"></div>
<div class="a" style="left:954px;top:829px;width:0;height:0;border-left:4px solid transparent;border-right:4px solid transparent;border-bottom:4px solid #606060"></div>
<div class="a" style="left:954px;top:930px;width:0;height:0;border-left:4px solid transparent;border-right:4px solid transparent;border-top:4px solid #606060"></div>
<div class="a" style="left:393px;top:940px;width:573px;height:18px;background:#f0f0f0"></div>
<div class="a" style="left:400px;top:945px;width:0;height:0;border-top:4px solid transparent;border-bottom:4px solid transparent;border-right:4px solid #606060"></div>
<div class="a" style="left:937px;top:945px;width:0;height:0;border-top:4px solid transparent;border-bottom:4px solid transparent;border-left:4px solid #606060"></div>
<svg class="a" style="left:399px;top:824px" width="14" height="14" viewBox="0 0 14 14"><defs><radialGradient id="gi" cx="0.4" cy="0.3" r="0.8"><stop offset="0" stop-color="#b8d4f4"/><stop offset="1" stop-color="#3a70c0"/></radialGradient></defs><circle cx="7" cy="7" r="6.4" fill="url(#gi)" stroke="#2a58a8" stroke-width="0.9"/><circle cx="7" cy="7" r="5.2" fill="none" stroke="#d8e8ff" stroke-width="0.5" opacity=".7"/><rect x="6" y="3" width="2" height="1.8" fill="#fff"/><path d="M5.3 5.6 H8 V10.2 H8.8 V11 H5.2 V10.2 H6 V6.4 H5.3 Z" fill="#fff"/></svg>
<div class="t mono" style="left:418px;top:824px;font-size:11.67px;line-height:17px">compiling C:\...\cetodo\cetodo.coedit</div>
<svg class="a" style="left:399px;top:842px" width="14" height="14" viewBox="0 0 14 14"><defs><radialGradient id="gi" cx="0.4" cy="0.3" r="0.8"><stop offset="0" stop-color="#b8d4f4"/><stop offset="1" stop-color="#3a70c0"/></radialGradient></defs><circle cx="7" cy="7" r="6.4" fill="url(#gi)" stroke="#2a58a8" stroke-width="0.9"/><circle cx="7" cy="7" r="5.2" fill="none" stroke="#d8e8ff" stroke-width="0.5" opacity=".7"/><rect x="6" y="3" width="2" height="1.8" fill="#fff"/><path d="M5.3 5.6 H8 V10.2 H8.8 V11 H5.2 V10.2 H6 V6.4 H5.3 Z" fill="#fff"/></svg>
<div class="t mono" style="left:418px;top:842px;font-size:11.67px;line-height:17px">C:\...\cetodo\cetodo.coedit has been successfully compiled</div>
<div class="dots" style="left:975px;top:779px;width:504px;background-position:2px 0"></div>
<div class="dots" style="left:975px;top:781px;width:504px;background-position:0px 0"></div>
<div class="dots" style="left:975px;top:783px;width:504px;background-position:2px 0"></div>
<div class="t" style="left:1229px;top:773px;width:0;height:16px;line-height:18px"><span style="position:absolute;left:0;top:0;transform:translateX(-50%);background:#f0f0f0;padding:0 2px">Todo list</span></div>
<div class="cls" style="left:1482px;top:773px"><svg width="9" height="9" style="position:absolute;left:1px;top:3px"><path d="M2.4 2.4 L6.6 6.6 M6.6 2.4 L2.4 6.6" stroke="#2a3444" stroke-width="3.2" stroke-linecap="round"/><path d="M2.4 2.4 L6.6 6.6 M6.6 2.4 L2.4 6.6" stroke="#fff" stroke-width="1.6" stroke-linecap="round"/></svg></div>
<div class="btn" style="left:979px;top:795px;width:25px;height:22px"></div>
<svg class="a" style="left:983px;top:797px" width="17" height="16" viewBox="0 0 17 16"><defs><linearGradient id="gb" x1="0" y1="0" x2="0.6" y2="1"><stop offset="0" stop-color="#3a8ad0"/><stop offset="1" stop-color="#98d4ff"/></linearGradient></defs><path d="M1 1.2 H7 V7.2 L5.4 5.6 C4.8 6.5 4.6 7.3 4.6 8.3 C4.6 10 5.5 11.2 7 11.8 V15.2 C3.4 14.7 1.3 11.8 1.3 8.5 C1.3 6.6 1.9 4.9 3 3.2 Z" fill="url(#gb)" stroke="#2a70c0" stroke-width="0.8" stroke-linejoin="round"/><g transform="rotate(180 8.5 8.2)"><path d="M1 1.2 H7 V7.2 L5.4 5.6 C4.8 6.5 4.6 7.3 4.6 8.3 C4.6 10 5.5 11.2 7 11.8 V15.2 C3.4 14.7 1.3 11.8 1.3 8.5 C1.3 6.6 1.9 4.9 3 3.2 Z" fill="url(#gb)" stroke="#2a70c0" stroke-width="0.8" stroke-linejoin="round"/></g></svg>
<div class="edit" style="left:1013px;top:794px;width:451px;height:24px;background:#fff"></div>
<div class="a" style="left:1467px;top:795px;width:24px;height:22px;border:1px solid #a3abb0;border-radius:3px;background:#f3f3f3;box-shadow:inset 0 0 0 1px #fff"></div>
<svg class="a" style="left:1471px;top:799px" width="16" height="15" viewBox="0 0 16 15"><defs><linearGradient id="gf" x1="0" y1="0" x2="1" y2="0"><stop offset="0" stop-color="#c8c8c8"/><stop offset=".5" stop-color="#f4f4f4"/><stop offset="1" stop-color="#b8b8b8"/></linearGradient></defs><path d="M0.8 1 H15.2 V2.6 L9.4 8.6 V13.6 H7 V8.6 L0.8 2.6 Z" fill="url(#gf)" stroke="#a8a8a8" stroke-width="0.9"/><path d="M10 9 L14.4 13.4 M14.4 9 L10 13.4" stroke="#2a2a2a" stroke-width="2.2" stroke-linecap="round"/></svg>
<div class="box" style="left:977px;top:822px;width:514px;height:137px;background:#fff;border-color:#828790;"></div>
<div class="a" style="left:978px;top:823px;width:494px;height:23px;background:linear-gradient(#ffffff,#f7f8fa 50%,#f1f2f4 50%,#f1f2f4);border-bottom:1px solid #d5d5d5"></div>
<div class="a" style="left:1228px;top:824px;width:1px;height:21px;background:#e4e4e4"></div>
<div class="a" style="left:1330px;top:824px;width:1px;height:21px;background:#e4e4e4"></div>
<div class="a" style="left:1428px;top:824px;width:1px;height:21px;background:#e4e4e4"></div>
<div class="t" style="left:985px;top:828px;">text</div>
<div class="t" style="left:1236px;top:828px;">category</div>
<div class="t" style="left:1335px;top:828px;">status</div>
<div class="t" style="left:1436px;top:828px;">priority</div>
<div class="a" style="left:983px;top:848px;width:246px;height:19px;background:#3399ff"></div>
<div class="a" style="left:978px;top:846px;width:494px;height:94px;overflow:hidden">
<div class="t" style="left:7px;top:4px;color:#fff">NEVER call writeln() in this program otherwi...</div>
<div class="t" style="left:7px;top:23px;">set this property as const() to set it read only.</div>
<div class="t" style="left:7px;top:42px;">save this property in the inifile.</div>
<div class="t" style="left:258px;top:42px;">feature</div>
<div class="t" style="left:357px;top:42px;">Done</div>
<div class="t" style="left:7px;top:61px;">annotates the member of the module as @s...</div>
<div class="t" style="left:258px;top:61px;">annnotations</div>
<div class="t" style="left:458px;top:61px;">8</div>
<div class="t" style="left:7px;top:80px;">save this property in the inifile.</div>
<div class="t" style="left:258px;top:80px;">feature</div>
<div class="t" style="left:357px;top:80px;">Done</div>
</div>
<div class="a" style="left:1472px;top:823px;width:17px;height:117px;background:#f0f0f0"></div>
<div class="a" style="left:1476px;top:830px;width:0;height:0;border-left:4px solid transparent;border-right:4px solid transparent;border-bottom:4px solid #404040"></div>
<div class="a" style="left:1476px;top:928px;width:0;height:0;border-left:4px solid transparent;border-right:4px solid transparent;border-top:4px solid #404040"></div>
<div class="a" style="left:1473px;top:843px;width:14px;height:62px;border:1px solid #8b8b8b;border-radius:2px;background:linear-gradient(to right,#f4f4f4,#dcdcdc)"></div>
<div class="a" style="left:1476px;top:871px;width:7px;height:6px;background:repeating-linear-gradient(#404040 0 1px,transparent 1px 2px)"></div>
<div class="a" style="left:978px;top:940px;width:494px;height:18px;background:#f0f0f0"></div>
<div class="a" style="left:985px;top:945px;width:0;height:0;border-top:4px solid transparent;border-bottom:4px solid transparent;border-right:4px solid #404040"></div>
<div class="a" style="left:1461px;top:945px;width:0;height:0;border-top:4px solid transparent;border-bottom:4px solid transparent;border-left:4px solid #404040"></div>
<div class="a" style="left:997px;top:941px;width:430px;height:15px;border:1px solid #8b8b8b;border-radius:2px;background:linear-gradient(#f4f4f4,#dcdcdc)"></div>
<div class="a" style="left:1208px;top:945px;width:6px;height:7px;background:repeating-linear-gradient(to right,#404040 0 1px,transparent 1px 2px)"></div>
<div class="grip" style="left:929px;top:964px"></div>
<div class="dots" style="left:390px;top:972px;width:1089px;background-position:2px 0"></div>
<div class="dots" style="left:390px;top:974px;width:1089px;background-position:0px 0"></div>
<div class="dots" style="left:390px;top:976px;width:1089px;background-position:2px 0"></div>
<div class="t" style="left:937px;top:966px;width:0;height:16px;line-height:18px"><span style="position:absolute;left:0;top:0;transform:translateX(-50%);background:#f0f0f0;padding:0 2px">Process input</span></div>
<div class="cls" style="left:1482px;top:966px"><svg width="9" height="9" style="position:absolute;left:1px;top:3px"><path d="M2.4 2.4 L6.6 6.6 M6.6 2.4 L2.4 6.6" stroke="#2a3444" stroke-width="3.2" stroke-linecap="round"/><path d="M2.4 2.4 L6.6 6.6 M6.6 2.4 L2.4 6.6" stroke="#fff" stroke-width="1.6" stroke-linecap="round"/></svg></div>
<div class="a" style="left:393px;top:987px;width:1098px;height:22px;border:1px solid #b0b0b0;border-right-color:#fff;border-bottom-color:#fff;background:#f0f0f0"></div>
<div class="t" style="left:395px;top:990px;">no process</div>
<div class="edit" style="left:394px;top:1013px;width:1018px;height:23px;background:#fff"></div>
<div class="btn" style="left:1417px;top:1014px;width:73px;height:21px"></div>
<div class="t" style="left:1417px;top:1017px;width:73px;text-align:center">Send</div>
<div class="a" style="left:388px;top:530px;width:2px;height:2px;background:#9a9a9a;border-radius:1px 0 0 0"></div>
<div class="a" style="left:388px;top:534px;width:2px;height:2px;background:#9a9a9a;border-radius:1px 0 0 0"></div>
<div class="a" style="left:388px;top:538px;width:2px;height:2px;background:#9a9a9a;border-radius:1px 0 0 0"></div>
<div class="a" style="left:388px;top:542px;width:2px;height:2px;background:#9a9a9a;border-radius:1px 0 0 0"></div>
<div class="a" style="left:388px;top:546px;width:2px;height:2px;background:#9a9a9a;border-radius:1px 0 0 0"></div>
<div class="a" style="left:388px;top:550px;width:2px;height:2px;background:#9a9a9a;border-radius:1px 0 0 0"></div>
<div class="a" style="left:388px;top:554px;width:2px;height:2px;background:#9a9a9a;border-radius:1px 0 0 0"></div>
<div class="a" style="left:1497px;top:530px;width:2px;height:2px;background:#9a9a9a;border-radius:1px 0 0 0"></div>
<div class="a" style="left:1497px;top:534px;width:2px;height:2px;background:#9a9a9a;border-radius:1px 0 0 0"></div>
<div class="a" style="left:1497px;top:538px;width:2px;height:2px;background:#9a9a9a;border-radius:1px 0 0 0"></div>
<div class="a" style="left:1497px;top:542px;width:2px;height:2px;background:#9a9a9a;border-radius:1px 0 0 0"></div>
<div class="a" style="left:1497px;top:546px;width:2px;height:2px;background:#9a9a9a;border-radius:1px 0 0 0"></div>
<div class="a" style="left:1497px;top:550px;width:2px;height:2px;background:#9a9a9a;border-radius:1px 0 0 0"></div>
<div class="a" style="left:1497px;top:554px;width:2px;height:2px;background:#9a9a9a;border-radius:1px 0 0 0"></div>
<div class="a" style="left:971px;top:854px;width:2px;height:2px;background:#9a9a9a;border-radius:1px 0 0 0"></div>
<div class="a" style="left:971px;top:858px;width:2px;height:2px;background:#9a9a9a;border-radius:1px 0 0 0"></div>
<div class="a" style="left:971px;top:862px;width:2px;height:2px;background:#9a9a9a;border-radius:1px 0 0 0"></div>
<div class="a" style="left:971px;top:866px;width:2px;height:2px;background:#9a9a9a;border-radius:1px 0 0 0"></div>
<div class="a" style="left:971px;top:870px;width:2px;height:2px;background:#9a9a9a;border-radius:1px 0 0 0"></div>
<div class="a" style="left:971px;top:874px;width:2px;height:2px;background:#9a9a9a;border-radius:1px 0 0 0"></div>
<div class="a" style="left:971px;top:878px;width:2px;height:2px;background:#9a9a9a;border-radius:1px 0 0 0"></div>
<div class="dots" style="left:1497px;top:53px;width:407px;background-position:2px 0"></div>
<div class="dots" style="left:1497px;top:55px;width:407px;background-position:0px 0"></div>
<div class="dots" style="left:1497px;top:57px;width:407px;background-position:2px 0"></div>
<div class="t" style="left:1704px;top:47px;width:0;height:16px;line-height:18px"><span style="position:absolute;left:0;top:0;transform:translateX(-50%);background:#f0f0f0;padding:0 2px">Project inspector</span></div>
<div class="cls" style="left:1907px;top:47px"><svg width="9" height="9" style="position:absolute;left:1px;top:3px"><path d="M2.4 2.4 L6.6 6.6 M6.6 2.4 L2.4 6.6" stroke="#2a3444" stroke-width="3.2" stroke-linecap="round"/><path d="M2.4 2.4 L6.6 6.6 M6.6 2.4 L2.4 6.6" stroke="#fff" stroke-width="1.6" stroke-linecap="round"/></svg></div>
<div class="btn" style="left:1502px;top:67px;width:26px;height:22px"></div>
<div class="btn" style="left:1530px;top:67px;width:26px;height:22px"></div>
<div class="btn" style="left:1558px;top:67px;width:26px;height:22px"></div>
<div class="btn" style="left:1586px;top:67px;width:26px;height:22px"></div>
<div class="btn" style="left:1614px;top:67px;width:26px;height:22px"></div>
<svg class="a" style="left:1509px;top:70px" width="12" height="15" viewBox="0 0 12 15"><path d="M0.5 0.5 H7.5 L10.5 3.5 V12.5 H0.5 Z" fill="#fafafa" stroke="#a8a8a8"/><path d="M7.5 0.5 V3.5 H10.5" fill="none" stroke="#b8b8b8"/><path d="M1 13.5 H11" stroke="#d0d0d0"/></svg>
<div class="a" style="left:1516px;top:78px;width:8px;height:8px;border-radius:50%;background:radial-gradient(circle at 40% 35%,#fff8 0,#48a828 60%);border:1px solid #48a828"></div><div class="a" style="left:1518px;top:81px;width:4px;height:2px;background:#fff"></div><div class="a" style="left:1519px;top:80px;width:2px;height:4px;background:#fff"></div>
<svg class="a" style="left:1537px;top:70px" width="12" height="15" viewBox="0 0 12 15"><path d="M0.5 0.5 H7.5 L10.5 3.5 V12.5 H0.5 Z" fill="#fafafa" stroke="#a8a8a8"/><path d="M7.5 0.5 V3.5 H10.5" fill="none" stroke="#b8b8b8"/><path d="M1 13.5 H11" stroke="#d0d0d0"/></svg>
<div class="a" style="left:1544px;top:78px;width:8px;height:8px;border-radius:50%;background:radial-gradient(circle at 40% 35%,#fff8 0,#e86020 60%);border:1px solid #e86020"></div><div class="a" style="left:1546px;top:81px;width:4px;height:2px;background:#fff"></div>
<svg class="a" style="left:1563px;top:71px" width="16" height="13" viewBox="0 0 16 13"><path d="M0.5 12.5 V1.5 Q0.5 0.5 1.5 0.5 H5 L6 1.5 H12.5 Q13.5 1.5 13.5 2.5 V5" fill="#f6d070" stroke="#d09038"/><path d="M0.5 12.5 L3 5.5 H15.5 L13.5 12.5 Z" fill="#fde49a" stroke="#d09038" stroke-linejoin="round"/><path d="M3.5 7 H14" stroke="#fff6d0" stroke-width="1"/></svg>
<div class="a" style="left:1572px;top:78px;width:8px;height:8px;border-radius:50%;background:radial-gradient(circle at 40% 35%,#fff8 0,#48b020 60%);border:1px solid #48b020"></div><div class="a" style="left:1574px;top:81px;width:4px;height:2px;background:#fff"></div><div class="a" style="left:1575px;top:80px;width:2px;height:4px;background:#fff"></div>
<svg class="a" style="left:1591px;top:71px" width="16" height="13" viewBox="0 0 16 13"><path d="M0.5 12.5 V1.5 Q0.5 0.5 1.5 0.5 H5 L6 1.5 H12.5 Q13.5 1.5 13.5 2.5 V5" fill="#f6d070" stroke="#d09038"/><path d="M0.5 12.5 L3 5.5 H15.5 L13.5 12.5 Z" fill="#fde49a" stroke="#d09038" stroke-linejoin="round"/><path d="M3.5 7 H14" stroke="#fff6d0" stroke-width="1"/></svg>
<div class="a" style="left:1600px;top:78px;width:8px;height:8px;border-radius:50%;background:radial-gradient(circle at 40% 35%,#fff8 0,#e03030 60%);border:1px solid #e03030"></div><div class="a" style="left:1602px;top:81px;width:4px;height:2px;background:#fff"></div>
<svg class="a" style="left:1619px;top:70px" width="16" height="16" viewBox="0 0 16 16"><path d="M2.2 13.8 L8.2 7.8" stroke="#e07030" stroke-width="4.6" stroke-linecap="round"/><path d="M2.2 13.8 L8.2 7.8" stroke="#f8a060" stroke-width="3" stroke-linecap="round"/><path d="M8 8 L10 6" stroke="#808080" stroke-width="2.4"/><path d="M13.6 1.9 A3.1 3.1 0 1 0 14.4 5.9" fill="none" stroke="#7a7a7a" stroke-width="3"/><path d="M13.6 1.9 A3.1 3.1 0 1 0 14.4 5.9" fill="none" stroke="#c0c0c0" stroke-width="1.4"/></svg>
<div class="edit" style="left:1645px;top:66px;width:239px;height:23px;background:#fff"></div>
<div class="a" style="left:1887px;top:67px;width:26px;height:22px;border:1px solid #a3abb0;border-radius:3px;background:#f3f3f3;box-shadow:inset 0 0 0 1px #fff"></div>
<svg class="a" style="left:1892px;top:71px" width="16" height="15" viewBox="0 0 16 15"><defs><linearGradient id="gf" x1="0" y1="0" x2="1" y2="0"><stop offset="0" stop-color="#c8c8c8"/><stop offset=".5" stop-color="#f4f4f4"/><stop offset="1" stop-color="#b8b8b8"/></linearGradient></defs><path d="M0.8 1 H15.2 V2.6 L9.4 8.6 V13.6 H7 V8.6 L0.8 2.6 Z" fill="url(#gf)" stroke="#a8a8a8" stroke-width="0.9"/><path d="M10 9 L14.4 13.4 M14.4 9 L10 13.4" stroke="#2a2a2a" stroke-width="2.2" stroke-linecap="round"/></svg>
<div class="box" style="left:1501px;top:92px;width:417px;height:230px;background:#fff;border-color:#828790;"></div>
<div class="a" style="left:1507px;top:95px;width:10px;height:12px;border:1px solid #b0b0b0;background:#fff;border-radius:0 2px 0 0"></div><div class="a" style="left:1510px;top:97px;width:10px;height:12px;border:1px solid #b0b0b0;background:#fff;border-radius:0 2px 0 0"></div><div class="a" style="left:1513px;top:99px;width:10px;height:12px;border:1px solid #b0b0b0;background:#fff;border-radius:0 2px 0 0"></div>
<div class="t" style="left:1527px;top:95px;">Source files</div>
<div class="a" style="left:1513px;top:121px;width:8px;height:1px;background:repeating-linear-gradient(to right,#a0a0a0 0 1px,transparent 1px 2px)"></div>
<div class="a" style="left:1513px;top:112px;width:1px;height:9px;background:repeating-linear-gradient(#a0a0a0 0 1px,transparent 1px 2px)"></div>
<svg class="a" style="left:1524px;top:113px" width="13" height="15" viewBox="0 0 13 15"><path d="M0.5 0.5 H8.5 L11.5 3.5 V12.5 H0.5 Z" fill="#fafafa" stroke="#a8a8a8"/><path d="M8.5 0.5 V3.5 H11.5" fill="none" stroke="#b8b8b8"/><path d="M1 13.5 H12" stroke="#d0d0d0"/></svg>
<svg class="a" style="left:1526px;top:117px" width="8" height="9" viewBox="0 0 8 9"><path d="M0 1.5 H7 M0 3.5 H7 M0 5.5 H7 M0 7.5 H7" stroke="#b0b0b0" stroke-width="0.8"/></svg>
<div class="a" style="left:1540px;top:112px;width:53px;height:17px;border:1px solid #d9d9d9;border-radius:2px;background:linear-gradient(#fafafa,#ececec)"></div>
<div class="t" style="left:1542px;top:113px;">cetodo.d</div>
<svg class="a" style="left:1507px;top:131px" width="16" height="16" viewBox="0 0 16 16"><path d="M2.2 13.8 L8.2 7.8" stroke="#4070c0" stroke-width="4.6" stroke-linecap="round"/><path d="M2.2 13.8 L8.2 7.8" stroke="#6a9ee0" stroke-width="3" stroke-linecap="round"/><path d="M8 8 L10 6" stroke="#808080" stroke-width="2.4"/><path d="M13.6 1.9 A3.1 3.1 0 1 0 14.4 5.9" fill="none" stroke="#7a7a7a" stroke-width="3"/><path d="M13.6 1.9 A3.1 3.1 0 1 0 14.4 5.9" fill="none" stroke="#c0c0c0" stroke-width="1.4"/></svg>
<div class="t" style="left:1527px;top:131px;">Configurations</div>
<div class="a" style="left:1513px;top:148px;width:1px;height:27px;background:repeating-linear-gradient(#a0a0a0 0 1px,transparent 1px 2px)"></div>
<div class="a" style="left:1513px;top:157px;width:8px;height:1px;background:repeating-linear-gradient(to right,#a0a0a0 0 1px,transparent 1px 2px)"></div>
<div class="a" style="left:1513px;top:175px;width:8px;height:1px;background:repeating-linear-gradient(to right,#a0a0a0 0 1px,transparent 1px 2px)"></div>
<svg class="a" style="left:1527px;top:151px" width="11" height="11" viewBox="0 0 11 11"><rect x="4.51" y="0.5" width="1.98" height="3.30" fill="#b0b0b0" stroke="#888" stroke-width="0.6" transform="rotate(0 5.50 5.50)"/><rect x="4.51" y="0.5" width="1.98" height="3.30" fill="#b0b0b0" stroke="#888" stroke-width="0.6" transform="rotate(45 5.50 5.50)"/><rect x="4.51" y="0.5" width="1.98" height="3.30" fill="#b0b0b0" stroke="#888" stroke-width="0.6" transform="rotate(90 5.50 5.50)"/><rect x="4.51" y="0.5" width="1.98" height="3.30" fill="#b0b0b0" stroke="#888" stroke-width="0.6" transform="rotate(135 5.50 5.50)"/><rect x="4.51" y="0.5" width="1.98" height="3.30" fill="#b0b0b0" stroke="#888" stroke-width="0.6" transform="rotate(180 5.50 5.50)"/><rect x="4.51" y="0.5" width="1.98" height="3.30" fill="#b0b0b0" stroke="#888" stroke-width="0.6" transform="rotate(225 5.50 5.50)"/><rect x="4.51" y="0.5" width="1.98" height="3.30" fill="#b0b0b0" stroke="#888" stroke-width="0.6" transform="rotate(270 5.50 5.50)"/><rect x="4.51" y="0.5" width="1.98" height="3.30" fill="#b0b0b0" stroke="#888" stroke-width="0.6" transform="rotate(315 5.50 5.50)"/><circle cx="5.50" cy="5.50" r="3.96" fill="#b0b0b0" stroke="#888" stroke-width="0.7"/><circle cx="5.50" cy="5.50" r="1.78" fill="none" stroke="#f0f0f0" stroke-width="0.88"/></svg>
<div class="t" style="left:1542px;top:149px;">testwith_CPFS</div>
<svg class="a" style="left:1527px;top:169px" width="11" height="11" viewBox="0 0 11 11"><rect x="4.51" y="0.5" width="1.98" height="3.30" fill="#b0b0b0" stroke="#888" stroke-width="0.6" transform="rotate(0 5.50 5.50)"/><rect x="4.51" y="0.5" width="1.98" height="3.30" fill="#b0b0b0" stroke="#888" stroke-width="0.6" transform="rotate(45 5.50 5.50)"/><rect x="4.51" y="0.5" width="1.98" height="3.30" fill="#b0b0b0" stroke="#888" stroke-width="0.6" transform="rotate(90 5.50 5.50)"/><rect x="4.51" y="0.5" width="1.98" height="3.30" fill="#b0b0b0" stroke="#888" stroke-width="0.6" transform="rotate(135 5.50 5.50)"/><rect x="4.51" y="0.5" width="1.98" height="3.30" fill="#b0b0b0" stroke="#888" stroke-width="0.6" transform="rotate(180 5.50 5.50)"/><rect x="4.51" y="0.5" width="1.98" height="3.30" fill="#b0b0b0" stroke="#888" stroke-width="0.6" transform="rotate(225 5.50 5.50)"/><rect x="4.51" y="0.5" width="1.98" height="3.30" fill="#b0b0b0" stroke="#888" stroke-width="0.6" transform="rotate(270 5.50 5.50)"/><rect x="4.51" y="0.5" width="1.98" height="3.30" fill="#b0b0b0" stroke="#888" stroke-width="0.6" transform="rotate(315 5.50 5.50)"/><circle cx="5.50" cy="5.50" r="3.96" fill="#b0b0b0" stroke="#888" stroke-width="0.7"/><circle cx="5.50" cy="5.50" r="1.78" fill="none" stroke="#f0f0f0" stroke-width="0.88"/></svg>
<div class="t" style="left:1542px;top:167px;">release (active)</div>
<svg class="a" style="left:1507px;top:185px" width="16" height="13" viewBox="0 0 16 13"><path d="M0.5 12.5 V1.5 Q0.5 0.5 1.5 0.5 H5 L6 1.5 H12.5 Q13.5 1.5 13.5 2.5 V5" fill="#f6d070" stroke="#d09038"/><path d="M0.5 12.5 L3 5.5 H15.5 L13.5 12.5 Z" fill="#fde49a" stroke="#d09038" stroke-linejoin="round"/><path d="M3.5 7 H14" stroke="#fff6d0" stroke-width="1"/></svg>
<svg class="a" style="left:1514px;top:190px" width="10" height="10" viewBox="0 0 10 10"><path d="M0.8 3.2 H4.2 V0.8 L8.6 4.8 L4.2 8.8 V6.4 H0.8 Z" fill="#6cc030" stroke="#3a8010" stroke-width="0.9" stroke-linejoin="round"/></svg>
<div class="t" style="left:1527px;top:185px;">Imports</div>
<svg class="a" style="left:1507px;top:203px" width="16" height="13" viewBox="0 0 16 13"><path d="M0.5 12.5 V1.5 Q0.5 0.5 1.5 0.5 H5 L6 1.5 H12.5 Q13.5 1.5 13.5 2.5 V5" fill="#f6d070" stroke="#d09038"/><path d="M0.5 12.5 L3 5.5 H15.5 L13.5 12.5 Z" fill="#fde49a" stroke="#d09038" stroke-linejoin="round"/><path d="M3.5 7 H14" stroke="#fff6d0" stroke-width="1"/></svg>
<svg class="a" style="left:1514px;top:208px" width="10" height="10" viewBox="0 0 10 10"><path d="M0.8 3.2 H4.2 V0.8 L8.6 4.8 L4.2 8.8 V6.4 H0.8 Z" fill="#6cc030" stroke="#3a8010" stroke-width="0.9" stroke-linejoin="round"/></svg>
<div class="t" style="left:1527px;top:203px;">Includes</div>
<div class="a" style="left:1507px;top:221px;width:10px;height:12px;border:1px solid #b0b0b0;background:#fff;border-radius:0 2px 0 0"></div><div class="a" style="left:1510px;top:223px;width:10px;height:12px;border:1px solid #b0b0b0;background:#fff;border-radius:0 2px 0 0"></div><div class="a" style="left:1513px;top:225px;width:10px;height:12px;border:1px solid #b0b0b0;background:#fff;border-radius:0 2px 0 0"></div>
<div class="t" style="left:1527px;top:221px;">Extra sources</div>
<div class="grip" style="left:1695px;top:325px"></div>
<div class="dots" style="left:1497px;top:333px;width:407px;background-position:2px 0"></div>
<div class="dots" style="left:1497px;top:335px;width:407px;background-position:0px 0"></div>
<div class="dots" style="left:1497px;top:337px;width:407px;background-position:2px 0"></div>
<div class="t" style="left:1704px;top:327px;width:0;height:16px;line-height:18px"><span style="position:absolute;left:0;top:0;transform:translateX(-50%);background:#f0f0f0;padding:0 2px">Project configuration</span></div>
<div class="cls" style="left:1907px;top:327px"><svg width="9" height="9" style="position:absolute;left:1px;top:3px"><path d="M2.4 2.4 L6.6 6.6 M6.6 2.4 L2.4 6.6" stroke="#2a3444" stroke-width="3.2" stroke-linecap="round"/><path d="M2.4 2.4 L6.6 6.6 M6.6 2.4 L2.4 6.6" stroke="#fff" stroke-width="1.6" stroke-linecap="round"/></svg></div>
<div class="a" style="left:1503px;top:347px;width:292px;height:23px;border:1px solid #707070;border-radius:3px;background:linear-gradient(#f2f2f2 0,#ebebeb 50%,#dddddd 50%,#cfcfcf 100%)"></div>
<div class="t" style="left:1507px;top:351px;">release</div>
<div class="a" style="left:1782px;top:356px;width:0;height:0;border-left:4px solid transparent;border-right:4px solid transparent;border-top:4px solid #000"></div>
<div class="btn" style="left:1797px;top:347px;width:28px;height:22px"></div>
<div class="btn" style="left:1827px;top:347px;width:28px;height:22px"></div>
<div class="btn" style="left:1857px;top:347px;width:28px;height:22px"></div>
<div class="btn" style="left:1887px;top:347px;width:28px;height:22px"></div>
<svg class="a" style="left:1803px;top:350px" width="15" height="15" viewBox="0 0 15 15"><rect x="6.15" y="0.5" width="2.70" height="4.50" fill="#a8a8a8" stroke="#808080" stroke-width="0.6" transform="rotate(0 7.50 7.50)"/><rect x="6.15" y="0.5" width="2.70" height="4.50" fill="#a8a8a8" stroke="#808080" stroke-width="0.6" transform="rotate(45 7.50 7.50)"/><rect x="6.15" y="0.5" width="2.70" height="4.50" fill="#a8a8a8" stroke="#808080" stroke-width="0.6" transform="rotate(90 7.50 7.50)"/><rect x="6.15" y="0.5" width="2.70" height="4.50" fill="#a8a8a8" stroke="#808080" stroke-width="0.6" transform="rotate(135 7.50 7.50)"/><rect x="6.15" y="0.5" width="2.70" height="4.50" fill="#a8a8a8" stroke="#808080" stroke-width="0.6" transform="rotate(180 7.50 7.50)"/><rect x="6.15" y="0.5" width="2.70" height="4.50" fill="#a8a8a8" stroke="#808080" stroke-width="0.6" transform="rotate(225 7.50 7.50)"/><rect x="6.15" y="0.5" width="2.70" height="4.50" fill="#a8a8a8" stroke="#808080" stroke-width="0.6" transform="rotate(270 7.50 7.50)"/><rect x="6.15" y="0.5" width="2.70" height="4.50" fill="#a8a8a8" stroke="#808080" stroke-width="0.6" transform="rotate(315 7.50 7.50)"/><circle cx="7.50" cy="7.50" r="5.40" fill="#a8a8a8" stroke="#808080" stroke-width="0.7"/><circle cx="7.50" cy="7.50" r="2.43" fill="none" stroke="#f0f0f0" stroke-width="1.20"/></svg>
<svg class="a" style="left:1833px;top:350px" width="15" height="15" viewBox="0 0 15 15"><rect x="6.15" y="0.5" width="2.70" height="4.50" fill="#a8a8a8" stroke="#808080" stroke-width="0.6" transform="rotate(0 7.50 7.50)"/><rect x="6.15" y="0.5" width="2.70" height="4.50" fill="#a8a8a8" stroke="#808080" stroke-width="0.6" transform="rotate(45 7.50 7.50)"/><rect x="6.15" y="0.5" width="2.70" height="4.50" fill="#a8a8a8" stroke="#808080" stroke-width="0.6" transform="rotate(90 7.50 7.50)"/><rect x="6.15" y="0.5" width="2.70" height="4.50" fill="#a8a8a8" stroke="#808080" stroke-width="0.6" transform="rotate(135 7.50 7.50)"/><rect x="6.15" y="0.5" width="2.70" height="4.50" fill="#a8a8a8" stroke="#808080" stroke-width="0.6" transform="rotate(180 7.50 7.50)"/><rect x="6.15" y="0.5" width="2.70" height="4.50" fill="#a8a8a8" stroke="#808080" stroke-width="0.6" transform="rotate(225 7.50 7.50)"/><rect x="6.15" y="0.5" width="2.70" height="4.50" fill="#a8a8a8" stroke="#808080" stroke-width="0.6" transform="rotate(270 7.50 7.50)"/><rect x="6.15" y="0.5" width="2.70" height="4.50" fill="#a8a8a8" stroke="#808080" stroke-width="0.6" transform="rotate(315 7.50 7.50)"/><circle cx="7.50" cy="7.50" r="5.40" fill="#a8a8a8" stroke="#808080" stroke-width="0.7"/><circle cx="7.50" cy="7.50" r="2.43" fill="none" stroke="#f0f0f0" stroke-width="1.20"/></svg>
<svg class="a" style="left:1863px;top:350px" width="15" height="15" viewBox="0 0 15 15"><rect x="6.15" y="0.5" width="2.70" height="4.50" fill="#a8a8a8" stroke="#808080" stroke-width="0.6" transform="rotate(0 7.50 7.50)"/><rect x="6.15" y="0.5" width="2.70" height="4.50" fill="#a8a8a8" stroke="#808080" stroke-width="0.6" transform="rotate(45 7.50 7.50)"/><rect x="6.15" y="0.5" width="2.70" height="4.50" fill="#a8a8a8" stroke="#808080" stroke-width="0.6" transform="rotate(90 7.50 7.50)"/><rect x="6.15" y="0.5" width="2.70" height="4.50" fill="#a8a8a8" stroke="#808080" stroke-width="0.6" transform="rotate(135 7.50 7.50)"/><rect x="6.15" y="0.5" width="2.70" height="4.50" fill="#a8a8a8" stroke="#808080" stroke-width="0.6" transform="rotate(180 7.50 7.50)"/><rect x="6.15" y="0.5" width="2.70" height="4.50" fill="#a8a8a8" stroke="#808080" stroke-width="0.6" transform="rotate(225 7.50 7.50)"/><rect x="6.15" y="0.5" width="2.70" height="4.50" fill="#a8a8a8" stroke="#808080" stroke-width="0.6" transform="rotate(270 7.50 7.50)"/><rect x="6.15" y="0.5" width="2.70" height="4.50" fill="#a8a8a8" stroke="#808080" stroke-width="0.6" transform="rotate(315 7.50 7.50)"/><circle cx="7.50" cy="7.50" r="5.40" fill="#a8a8a8" stroke="#808080" stroke-width="0.7"/><circle cx="7.50" cy="7.50" r="2.43" fill="none" stroke="#f0f0f0" stroke-width="1.20"/></svg>
<svg class="a" style="left:1811px;top:357px" width="10" height="10" viewBox="0 0 10 10"><circle cx="5" cy="5" r="3.6" fill="#48a828" stroke="#ffffff80" stroke-width="0.6"/><path d="M2.9 5 H7.1" stroke="#fff" stroke-width="1.5"/><path d="M5 2.9 V7.1" stroke="#fff" stroke-width="1.5"/></svg>
<svg class="a" style="left:1841px;top:357px" width="10" height="10" viewBox="0 0 10 10"><circle cx="5" cy="5" r="3.6" fill="#e03828" stroke="#ffffff80" stroke-width="0.6"/><path d="M2.9 5 H7.1" stroke="#fff" stroke-width="1.5"/></svg>
<svg class="a" style="left:1870px;top:357px" width="10" height="10" viewBox="0 0 10 10"><path d="M0.8 3.4 H5 V0.8 L9.4 5 L5 9.2 V6.6 H0.8 Z" fill="#9ad030" stroke="#509010" stroke-width="0.9" stroke-linejoin="round"/></svg>
<svg class="a" style="left:1893px;top:350px" width="16" height="15" viewBox="0 0 16 15"><path d="M6.5 5 H4.2 Q1.5 5 1.5 7.5 Q1.5 10 4.2 10 H6.5 M9.5 5 H11.8 Q14.5 5 14.5 7.5 Q14.5 10 11.8 10 H9.5" fill="none" stroke="#707070" stroke-width="2.4"/><path d="M6.5 5 H4.2 Q1.5 5 1.5 7.5 Q1.5 10 4.2 10 H6.5 M9.5 5 H11.8 Q14.5 5 14.5 7.5 Q14.5 10 11.8 10 H9.5" fill="none" stroke="#f4f4f4" stroke-width="1"/><path d="M8 0.5 V2.5 M4 1 L5.5 2.8 M12 1 L10.5 2.8 M8 12.5 V14.5 M4 14 L5.5 12.2 M12 14 L10.5 12.2" stroke="#d02020" stroke-width="1"/></svg>
<div class="box" style="left:1503px;top:374px;width:160px;height:317px;background:#fff;border-color:#828790;"></div>
<div class="t" style="left:1511px;top:377px;">General</div>
<div class="t" style="left:1511px;top:395px;">Categories</div>
<div class="a" style="left:1515px;top:411px;width:1px;height:155px;background:repeating-linear-gradient(#a0a0a0 0 1px,transparent 1px 2px)"></div>
<div class="a" style="left:1516px;top:420px;width:7px;height:1px;background:repeating-linear-gradient(to right,#a0a0a0 0 1px,transparent 1px 2px)"></div>
<div class="t" style="left:1526px;top:413px;">Messages</div>
<div class="a" style="left:1516px;top:438px;width:7px;height:1px;background:repeating-linear-gradient(to right,#a0a0a0 0 1px,transparent 1px 2px)"></div>
<div class="t" style="left:1526px;top:431px;">Debugging</div>
<div class="a" style="left:1516px;top:456px;width:7px;height:1px;background:repeating-linear-gradient(to right,#a0a0a0 0 1px,transparent 1px 2px)"></div>
<div class="t" style="left:1526px;top:449px;">Documentation</div>
<div class="a" style="left:1516px;top:474px;width:7px;height:1px;background:repeating-linear-gradient(to right,#a0a0a0 0 1px,transparent 1px 2px)"></div>
<div class="t" style="left:1526px;top:467px;">Output</div>
<div class="a" style="left:1516px;top:492px;width:7px;height:1px;background:repeating-linear-gradient(to right,#a0a0a0 0 1px,transparent 1px 2px)"></div>
<div class="t" style="left:1526px;top:485px;">Others</div>
<div class="a" style="left:1516px;top:510px;width:7px;height:1px;background:repeating-linear-gradient(to right,#a0a0a0 0 1px,transparent 1px 2px)"></div>
<div class="t" style="left:1526px;top:503px;">Paths</div>
<div class="a" style="left:1516px;top:528px;width:7px;height:1px;background:repeating-linear-gradient(to right,#a0a0a0 0 1px,transparent 1px 2px)"></div>
<div class="t" style="left:1526px;top:521px;">Pre-build process</div>
<div class="a" style="left:1516px;top:546px;width:7px;height:1px;background:repeating-linear-gradient(to right,#a0a0a0 0 1px,transparent 1px 2px)"></div>
<div class="t" style="left:1526px;top:539px;">Post-build process</div>
<div class="a" style="left:1516px;top:564px;width:7px;height:1px;background:repeating-linear-gradient(to right,#a0a0a0 0 1px,transparent 1px 2px)"></div>
<div class="t" style="left:1526px;top:557px;">Run options</div>
<div class="a" style="left:1508px;top:574px;width:78px;height:18px;border:1px solid #d9d9d9;border-radius:2px;background:linear-gradient(#fafafa,#ececec)"></div>
<div class="t" style="left:1511px;top:575px;">All categories</div>
<div class="box" style="left:1668px;top:374px;width:248px;height:317px;background:#f0f0f0"></div>
<div class="a" style="left:1691px;top:375px;width:1px;height:315px;background:#808080"></div>
<div class="a" style="left:1813px;top:375px;width:1px;height:250px;background:#808080"></div>
<div class="a" style="left:1692px;top:400px;width:121px;height:1px;background:repeating-linear-gradient(to right,#a0a0a0 0 1px,transparent 1px 2px)"></div>
<div class="a" style="left:1815px;top:400px;width:82px;height:1px;background:repeating-linear-gradient(to right,#a0a0a0 0 1px,transparent 1px 2px)"></div>
<div class="t" style="left:1694px;top:380px;width:119px;overflow:hidden">debugingOptions</div>
<div class="t" style="left:1817px;top:380px;width:80px;overflow:hidden">(TDebugOpts)</div>
<div class="a" style="left:1679px;top:387px;width:0;height:0;border-top:5px solid transparent;border-bottom:5px solid transparent;border-left:6px solid #808080"></div><div class="a" style="left:1680px;top:389px;width:0;height:0;border-top:3px solid transparent;border-bottom:3px solid transparent;border-left:4px solid #f0f0f0"></div>
<div class="a" style="left:1692px;top:425px;width:121px;height:1px;background:repeating-linear-gradient(to right,#a0a0a0 0 1px,transparent 1px 2px)"></div>
<div class="a" style="left:1815px;top:425px;width:82px;height:1px;background:repeating-linear-gradient(to right,#a0a0a0 0 1px,transparent 1px 2px)"></div>
<div class="t" style="left:1694px;top:405px;width:119px;overflow:hidden">documentationOptions</div>
<div class="t" style="left:1817px;top:405px;width:80px;overflow:hidden">(TDocOpts)</div>
<div class="a" style="left:1679px;top:412px;width:0;height:0;border-top:5px solid transparent;border-bottom:5px solid transparent;border-left:6px solid #808080"></div><div class="a" style="left:1680px;top:414px;width:0;height:0;border-top:3px solid transparent;border-bottom:3px solid transparent;border-left:4px solid #f0f0f0"></div>
<div class="a" style="left:1692px;top:450px;width:121px;height:1px;background:repeating-linear-gradient(to right,#a0a0a0 0 1px,transparent 1px 2px)"></div>
<div class="a" style="left:1815px;top:450px;width:82px;height:1px;background:repeating-linear-gradient(to right,#a0a0a0 0 1px,transparent 1px 2px)"></div>
<div class="t" style="left:1694px;top:430px;width:119px;overflow:hidden">messagesOptions</div>
<div class="t" style="left:1817px;top:430px;width:80px;overflow:hidden">(TMsgOpts)</div>
<div class="a" style="left:1679px;top:437px;width:0;height:0;border-top:5px solid transparent;border-bottom:5px solid transparent;border-left:6px solid #808080"></div><div class="a" style="left:1680px;top:439px;width:0;height:0;border-top:3px solid transparent;border-bottom:3px solid transparent;border-left:4px solid #f0f0f0"></div>
<div class="a" style="left:1692px;top:475px;width:121px;height:1px;background:repeating-linear-gradient(to right,#a0a0a0 0 1px,transparent 1px 2px)"></div>
<div class="a" style="left:1815px;top:475px;width:82px;height:1px;background:repeating-linear-gradient(to right,#a0a0a0 0 1px,transparent 1px 2px)"></div>
<div class="t" style="left:1694px;top:455px;width:119px;overflow:hidden">name</div>
<div class="t" style="left:1817px;top:455px;width:80px;overflow:hidden">release</div>
<div class="a" style="left:1692px;top:500px;width:121px;height:1px;background:repeating-linear-gradient(to right,#a0a0a0 0 1px,transparent 1px 2px)"></div>
<div class="a" style="left:1815px;top:500px;width:82px;height:1px;background:repeating-linear-gradient(to right,#a0a0a0 0 1px,transparent 1px 2px)"></div>
<div class="t" style="left:1694px;top:480px;width:119px;overflow:hidden">otherOptions</div>
<div class="t" style="left:1817px;top:480px;width:80px;overflow:hidden">(TOtherOpts)</div>
<div class="a" style="left:1679px;top:487px;width:0;height:0;border-top:5px solid transparent;border-bottom:5px solid transparent;border-left:6px solid #808080"></div><div class="a" style="left:1680px;top:489px;width:0;height:0;border-top:3px solid transparent;border-bottom:3px solid transparent;border-left:4px solid #f0f0f0"></div>
<div class="a" style="left:1692px;top:525px;width:121px;height:1px;background:repeating-linear-gradient(to right,#a0a0a0 0 1px,transparent 1px 2px)"></div>
<div class="a" style="left:1815px;top:525px;width:82px;height:1px;background:repeating-linear-gradient(to right,#a0a0a0 0 1px,transparent 1px 2px)"></div>
<div class="t" style="left:1694px;top:505px;width:119px;overflow:hidden">outputOptions</div>
<div class="t" style="left:1817px;top:505px;width:80px;overflow:hidden">(TOutputOpts)</div>
<div class="a" style="left:1679px;top:512px;width:0;height:0;border-top:5px solid transparent;border-bottom:5px solid transparent;border-left:6px solid #808080"></div><div class="a" style="left:1680px;top:514px;width:0;height:0;border-top:3px solid transparent;border-bottom:3px solid transparent;border-left:4px solid #f0f0f0"></div>
<div class="a" style="left:1692px;top:550px;width:121px;height:1px;background:repeating-linear-gradient(to right,#a0a0a0 0 1px,transparent 1px 2px)"></div>
<div class="a" style="left:1815px;top:550px;width:82px;height:1px;background:repeating-linear-gradient(to right,#a0a0a0 0 1px,transparent 1px 2px)"></div>
<div class="t" style="left:1694px;top:530px;width:119px;overflow:hidden">pathsOptions</div>
<div class="t" style="left:1817px;top:530px;width:80px;overflow:hidden">(TPathsOpts)</div>
<div class="a" style="left:1679px;top:537px;width:0;height:0;border-top:5px solid transparent;border-bottom:5px solid transparent;border-left:6px solid #808080"></div><div class="a" style="left:1680px;top:539px;width:0;height:0;border-top:3px solid transparent;border-bottom:3px solid transparent;border-left:4px solid #f0f0f0"></div>
<div class="a" style="left:1692px;top:575px;width:121px;height:1px;background:repeating-linear-gradient(to right,#a0a0a0 0 1px,transparent 1px 2px)"></div>
<div class="a" style="left:1815px;top:575px;width:82px;height:1px;background:repeating-linear-gradient(to right,#a0a0a0 0 1px,transparent 1px 2px)"></div>
<div class="t" style="left:1694px;top:555px;width:119px;overflow:hidden">postBuildProcess</div>
<div class="t" style="left:1817px;top:555px;width:80px;overflow:hidden">(TCompileProcOptions)</div>
<div class="a" style="left:1679px;top:562px;width:0;height:0;border-top:5px solid transparent;border-bottom:5px solid transparent;border-left:6px solid #808080"></div><div class="a" style="left:1680px;top:564px;width:0;height:0;border-top:3px solid transparent;border-bottom:3px solid transparent;border-left:4px solid #f0f0f0"></div>
<div class="a" style="left:1692px;top:600px;width:121px;height:1px;background:repeating-linear-gradient(to right,#a0a0a0 0 1px,transparent 1px 2px)"></div>
<div class="a" style="left:1815px;top:600px;width:82px;height:1px;background:repeating-linear-gradient(to right,#a0a0a0 0 1px,transparent 1px 2px)"></div>
<div class="t" style="left:1694px;top:580px;width:119px;overflow:hidden">preBuildProcess</div>
<div class="t" style="left:1817px;top:580px;width:80px;overflow:hidden">(TCompileProcOptions)</div>
<div class="a" style="left:1679px;top:587px;width:0;height:0;border-top:5px solid transparent;border-bottom:5px solid transparent;border-left:6px solid #808080"></div><div class="a" style="left:1680px;top:589px;width:0;height:0;border-top:3px solid transparent;border-bottom:3px solid transparent;border-left:4px solid #f0f0f0"></div>
<div class="a" style="left:1692px;top:625px;width:121px;height:1px;background:repeating-linear-gradient(to right,#a0a0a0 0 1px,transparent 1px 2px)"></div>
<div class="a" style="left:1815px;top:625px;width:82px;height:1px;background:repeating-linear-gradient(to right,#a0a0a0 0 1px,transparent 1px 2px)"></div>
<div class="t" style="left:1694px;top:605px;width:119px;overflow:hidden">runOptions</div>
<div class="t" style="left:1817px;top:605px;width:80px;overflow:hidden">(TProjectRunOptions)</div>
<div class="a" style="left:1679px;top:612px;width:0;height:0;border-top:5px solid transparent;border-bottom:5px solid transparent;border-left:6px solid #808080"></div><div class="a" style="left:1680px;top:614px;width:0;height:0;border-top:3px solid transparent;border-bottom:3px solid transparent;border-left:4px solid #f0f0f0"></div>
<div class="a" style="left:1898px;top:375px;width:17px;height:315px;background:#f0f0f0"></div><div class="a" style="left:1902px;top:382px;width:0;height:0;border-left:4px solid transparent;border-right:4px solid transparent;border-bottom:4px solid #a0a0a0"></div><div class="a" style="left:1902px;top:679px;width:0;height:0;border-left:4px solid transparent;border-right:4px solid transparent;border-top:4px solid #a0a0a0"></div>
<div class="grip" style="left:1695px;top:697px"></div>
<div class="dots" style="left:1497px;top:705px;width:407px;background-position:2px 0"></div>
<div class="dots" style="left:1497px;top:707px;width:407px;background-position:0px 0"></div>
<div class="dots" style="left:1497px;top:709px;width:407px;background-position:2px 0"></div>
<div class="t" style="left:1704px;top:699px;width:0;height:16px;line-height:18px"><span style="position:absolute;left:0;top:0;transform:translateX(-50%);background:#f0f0f0;padding:0 2px">Tools editor</span></div>
<div class="cls" style="left:1907px;top:699px"><svg width="9" height="9" style="position:absolute;left:1px;top:3px"><path d="M2.4 2.4 L6.6 6.6 M6.6 2.4 L2.4 6.6" stroke="#2a3444" stroke-width="3.2" stroke-linecap="round"/><path d="M2.4 2.4 L6.6 6.6 M6.6 2.4 L2.4 6.6" stroke="#fff" stroke-width="1.6" stroke-linecap="round"/></svg></div>
<div class="btn" style="left:1504px;top:721px;width:26px;height:22px"></div>
<div class="btn" style="left:1532px;top:721px;width:26px;height:22px"></div>
<div class="btn" style="left:1560px;top:721px;width:26px;height:22px"></div>
<div class="btn" style="left:1588px;top:721px;width:26px;height:22px"></div>
<svg class="a" style="left:1509px;top:724px" width="15" height="13" viewBox="0 0 15 13"><rect x="0.8" y="0.8" width="13.4" height="11.4" fill="#fdf8f4" stroke="#2a7ac8" stroke-width="1.4"/><path d="M1.5 2.6 H13.5" stroke="#6ab0f0" stroke-width="1"/><path d="M2.5 5.5 H4 M2.5 9 H4" stroke="#808080" stroke-width="1"/><rect x="5" y="4.5" width="7" height="2" fill="#fff" stroke="#a0a0a0" stroke-width="0.6"/><rect x="5" y="8" width="7" height="2" fill="#fff" stroke="#a0a0a0" stroke-width="0.6"/></svg>
<svg class="a" style="left:1516px;top:730px" width="10" height="10" viewBox="0 0 10 10"><circle cx="5" cy="5" r="3.6" fill="#48a828" stroke="#ffffff80" stroke-width="0.6"/><path d="M2.9 5 H7.1" stroke="#fff" stroke-width="1.5"/><path d="M5 2.9 V7.1" stroke="#fff" stroke-width="1.5"/></svg>
<svg class="a" style="left:1537px;top:724px" width="15" height="13" viewBox="0 0 15 13"><rect x="0.8" y="0.8" width="13.4" height="11.4" fill="#fdf8f4" stroke="#2a7ac8" stroke-width="1.4"/><path d="M1.5 2.6 H13.5" stroke="#6ab0f0" stroke-width="1"/><path d="M2.5 5.5 H4 M2.5 9 H4" stroke="#808080" stroke-width="1"/><rect x="5" y="4.5" width="7" height="2" fill="#fff" stroke="#a0a0a0" stroke-width="0.6"/><rect x="5" y="8" width="7" height="2" fill="#fff" stroke="#a0a0a0" stroke-width="0.6"/></svg>
<svg class="a" style="left:1544px;top:730px" width="10" height="10" viewBox="0 0 10 10"><circle cx="5" cy="5" r="3.6" fill="#e03828" stroke="#ffffff80" stroke-width="0.6"/><path d="M2.9 5 H7.1" stroke="#fff" stroke-width="1.5"/></svg>
<svg class="a" style="left:1566px;top:725px" width="13" height="14" viewBox="0 0 13 14"><defs><linearGradient id="ga" x1="0" y1="0" x2="1" y2="0"><stop offset="0" stop-color="#1a88e0"/><stop offset=".5" stop-color="#90d8ff"/><stop offset="1" stop-color="#1a88e0"/></linearGradient></defs><path d="M4.5 0.8 H8.5 V7 H12.2 L6.5 13.2 L0.8 7 H4.5 Z" fill="url(#ga)" stroke="#2a70c0" stroke-width="0.9" stroke-linejoin="round"/></svg>
<svg class="a" style="left:1594px;top:725px" width="13" height="14" viewBox="0 0 13 14"><defs><linearGradient id="ga" x1="0" y1="0" x2="1" y2="0"><stop offset="0" stop-color="#1a88e0"/><stop offset=".5" stop-color="#90d8ff"/><stop offset="1" stop-color="#1a88e0"/></linearGradient></defs><path d="M4.5 0.8 H8.5 V7 H12.2 L6.5 13.2 L0.8 7 H4.5 Z" fill="url(#ga)" stroke="#2a70c0" stroke-width="0.9" stroke-linejoin="round" transform="rotate(180 6.5 7)"/></svg>
<div class="btn" style="left:1889px;top:721px;width:26px;height:22px"></div>
<svg class="a" style="left:1894px;top:724px" width="15" height="13" viewBox="0 0 15 13"><rect x="0.8" y="0.8" width="13.4" height="11.4" fill="#fdf8f4" stroke="#2a7ac8" stroke-width="1.4"/><path d="M1.5 2.6 H13.5" stroke="#6ab0f0" stroke-width="1"/><path d="M2.5 5.5 H4 M2.5 9 H4" stroke="#808080" stroke-width="1"/><rect x="5" y="4.5" width="7" height="2" fill="#fff" stroke="#a0a0a0" stroke-width="0.6"/><rect x="5" y="8" width="7" height="2" fill="#fff" stroke="#a0a0a0" stroke-width="0.6"/></svg>
<svg class="a" style="left:1904px;top:729px" width="8" height="10" viewBox="0 0 8 10"><path d="M3 0.5 H7.5 L5.5 3.5 H7.5 L2 9.5 L3.2 5 H1 Z" fill="#f8c830" stroke="#d08010" stroke-width="0.7"/></svg>
<div class="box" style="left:1503px;top:748px;width:161px;height:288px;background:#fff;border-color:#828790;"></div>
<div class="a" style="left:1505px;top:750px;width:157px;height:16px;background:#3399ff"></div>
<div class="t" style="left:1507px;top:750px;width:155px;overflow:hidden;color:#fff">console</div>
<div class="t" style="left:1507px;top:765px;width:155px;overflow:hidden;">explorer - this file dir</div>
<div class="t" style="left:1507px;top:780px;width:155px;overflow:hidden;">explorer - project dir</div>
<div class="t" style="left:1507px;top:795px;width:155px;overflow:hidden;">IDA - project output</div>
<div class="t" style="left:1507px;top:810px;width:155px;overflow:hidden;">dscanner - style</div>
<div class="t" style="left:1507px;top:825px;width:155px;overflow:hidden;">dscanner - custom opt for file</div>
<div class="t" style="left:1507px;top:840px;width:155px;overflow:hidden;">rdmd - current file</div>
<div class="t" style="left:1507px;top:855px;width:155px;overflow:hidden;">ddoc - project files</div>
<div class="t" style="left:1507px;top:870px;width:155px;overflow:hidden;">harbored - project files</div>
<div class="box" style="left:1668px;top:748px;width:248px;height:288px;background:#f0f0f0"></div>
<div class="a" style="left:1691px;top:749px;width:1px;height:286px;background:#808080"></div>
<div class="a" style="left:1769px;top:749px;width:1px;height:225px;background:#808080"></div>
<div class="a" style="left:1692px;top:774px;width:77px;height:1px;background:repeating-linear-gradient(to right,#a0a0a0 0 1px,transparent 1px 2px)"></div>
<div class="a" style="left:1771px;top:774px;width:126px;height:1px;background:repeating-linear-gradient(to right,#a0a0a0 0 1px,transparent 1px 2px)"></div>
<div class="t" style="left:1694px;top:754px;width:75px;overflow:hidden">chainAfter</div>
<div class="t" style="left:1773px;top:754px;width:124px;overflow:hidden">(TStringList)</div>
<div class="a" style="left:1692px;top:799px;width:77px;height:1px;background:repeating-linear-gradient(to right,#a0a0a0 0 1px,transparent 1px 2px)"></div>
<div class="a" style="left:1771px;top:799px;width:126px;height:1px;background:repeating-linear-gradient(to right,#a0a0a0 0 1px,transparent 1px 2px)"></div>
<div class="t" style="left:1694px;top:779px;width:75px;overflow:hidden">chainBefore</div>
<div class="t" style="left:1773px;top:779px;width:124px;overflow:hidden">(TStringList)</div>
<div class="a" style="left:1692px;top:824px;width:77px;height:1px;background:repeating-linear-gradient(to right,#a0a0a0 0 1px,transparent 1px 2px)"></div>
<div class="a" style="left:1771px;top:824px;width:126px;height:1px;background:repeating-linear-gradient(to right,#a0a0a0 0 1px,transparent 1px 2px)"></div>
<div class="t" style="left:1694px;top:804px;width:75px;overflow:hidden">executable</div>
<div class="t" style="left:1773px;top:804px;width:124px;overflow:hidden">cmd</div>
<div class="a" style="left:1692px;top:849px;width:77px;height:1px;background:repeating-linear-gradient(to right,#a0a0a0 0 1px,transparent 1px 2px)"></div>
<div class="a" style="left:1771px;top:849px;width:126px;height:1px;background:repeating-linear-gradient(to right,#a0a0a0 0 1px,transparent 1px 2px)"></div>
<div class="t" style="left:1694px;top:829px;width:75px;overflow:hidden">options</div>
<div class="t" style="left:1773px;top:829px;width:124px;overflow:hidden">[poNewConsole,poNewGroup]</div>
<div class="a" style="left:1679px;top:836px;width:0;height:0;border-top:5px solid transparent;border-bottom:5px solid transparent;border-left:6px solid #808080"></div><div class="a" style="left:1680px;top:838px;width:0;height:0;border-top:3px solid transparent;border-bottom:3px solid transparent;border-left:4px solid #f0f0f0"></div>
<div class="a" style="left:1692px;top:874px;width:77px;height:1px;background:repeating-linear-gradient(to right,#a0a0a0 0 1px,transparent 1px 2px)"></div>
<div class="a" style="left:1771px;top:874px;width:126px;height:1px;background:repeating-linear-gradient(to right,#a0a0a0 0 1px,transparent 1px 2px)"></div>
<div class="t" style="left:1694px;top:854px;width:75px;overflow:hidden">parameters</div>
<div class="t" style="left:1773px;top:854px;width:124px;overflow:hidden">(TStringList)</div>
<div class="a" style="left:1692px;top:899px;width:77px;height:1px;background:repeating-linear-gradient(to right,#a0a0a0 0 1px,transparent 1px 2px)"></div>
<div class="a" style="left:1771px;top:899px;width:126px;height:1px;background:repeating-linear-gradient(to right,#a0a0a0 0 1px,transparent 1px 2px)"></div>
<div class="t" style="left:1694px;top:879px;width:75px;overflow:hidden">queryParameters</div>
<div class="t" style="left:1773px;top:879px;width:124px;overflow:hidden">False</div>
<div class="a" style="left:1692px;top:924px;width:77px;height:1px;background:repeating-linear-gradient(to right,#a0a0a0 0 1px,transparent 1px 2px)"></div>
<div class="a" style="left:1771px;top:924px;width:126px;height:1px;background:repeating-linear-gradient(to right,#a0a0a0 0 1px,transparent 1px 2px)"></div>
<div class="t" style="left:1694px;top:904px;width:75px;overflow:hidden">showWindows</div>
<div class="t" style="left:1773px;top:904px;width:124px;overflow:hidden">swoNone</div>
<div class="a" style="left:1692px;top:949px;width:77px;height:1px;background:repeating-linear-gradient(to right,#a0a0a0 0 1px,transparent 1px 2px)"></div>
<div class="a" style="left:1771px;top:949px;width:126px;height:1px;background:repeating-linear-gradient(to right,#a0a0a0 0 1px,transparent 1px 2px)"></div>
<div class="t" style="left:1694px;top:929px;width:75px;overflow:hidden">toolAlias</div>
<div class="t" style="left:1773px;top:929px;width:124px;overflow:hidden">console</div>
<div class="a" style="left:1692px;top:974px;width:77px;height:1px;background:repeating-linear-gradient(to right,#a0a0a0 0 1px,transparent 1px 2px)"></div>
<div class="a" style="left:1771px;top:974px;width:126px;height:1px;background:repeating-linear-gradient(to right,#a0a0a0 0 1px,transparent 1px 2px)"></div>
<div class="t" style="left:1694px;top:954px;width:75px;overflow:hidden">workingDirectory</div>
<div class="t" style="left:1773px;top:954px;width:124px;overflow:hidden"></div>
<div class="a" style="left:1898px;top:749px;width:17px;height:286px;background:#f0f0f0"></div><div class="a" style="left:1902px;top:756px;width:0;height:0;border-left:4px solid transparent;border-right:4px solid transparent;border-bottom:4px solid #a0a0a0"></div><div class="a" style="left:1902px;top:1024px;width:0;height:0;border-left:4px solid transparent;border-right:4px solid transparent;border-top:4px solid #a0a0a0"></div>
<div class="a" style="left:1665px;top:519px;width:2px;height:2px;background:#9a9a9a;border-radius:1px 0 0 0"></div>
<div class="a" style="left:1665px;top:523px;width:2px;height:2px;background:#9a9a9a;border-radius:1px 0 0 0"></div>
<div class="a" style="left:1665px;top:527px;width:2px;height:2px;background:#9a9a9a;border-radius:1px 0 0 0"></div>
<div class="a" style="left:1665px;top:531px;width:2px;height:2px;background:#9a9a9a;border-radius:1px 0 0 0"></div>
<div class="a" style="left:1665px;top:535px;width:2px;height:2px;background:#9a9a9a;border-radius:1px 0 0 0"></div>
<div class="a" style="left:1665px;top:539px;width:2px;height:2px;background:#9a9a9a;border-radius:1px 0 0 0"></div>
<div class="a" style="left:1665px;top:543px;width:2px;height:2px;background:#9a9a9a;border-radius:1px 0 0 0"></div>
<div class="a" style="left:1665px;top:878px;width:2px;height:2px;background:#9a9a9a;border-radius:1px 0 0 0"></div>
<div class="a" style="left:1665px;top:882px;width:2px;height:2px;background:#9a9a9a;border-radius:1px 0 0 0"></div>
<div class="a" style="left:1665px;top:886px;width:2px;height:2px;background:#9a9a9a;border-radius:1px 0 0 0"></div>
<div class="a" style="left:1665px;top:890px;width:2px;height:2px;background:#9a9a9a;border-radius:1px 0 0 0"></div>
<div class="a" style="left:1665px;top:894px;width:2px;height:2px;background:#9a9a9a;border-radius:1px 0 0 0"></div>
<div class="a" style="left:1665px;top:898px;width:2px;height:2px;background:#9a9a9a;border-radius:1px 0 0 0"></div>
<div class="a" style="left:1665px;top:902px;width:2px;height:2px;background:#9a9a9a;border-radius:1px 0 0 0"></div>
</body></html>
